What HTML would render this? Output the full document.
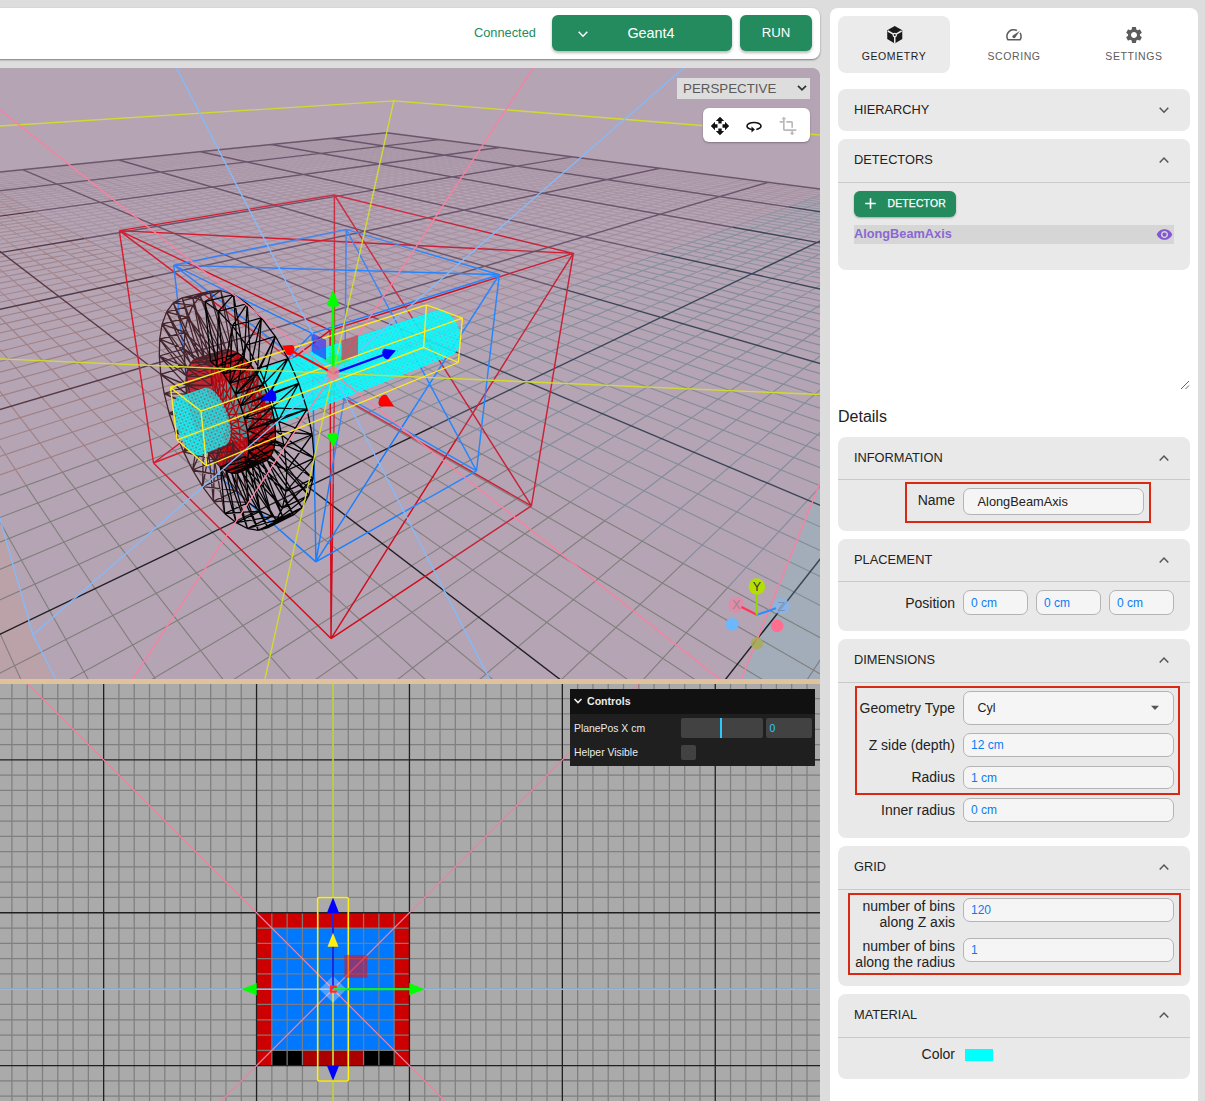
<!DOCTYPE html><html><head><meta charset="utf-8"><title>yaptide</title><style>
*{box-sizing:border-box;margin:0;padding:0}
html,body{width:1205px;height:1101px;overflow:hidden;background:#dddddd;font-family:"Liberation Sans",sans-serif;color:#222}
.abs{position:absolute}
#topbar{left:-30px;top:8px;width:850px;height:51px;background:#fff;border-radius:8px;box-shadow:0 1px 2px rgba(0,0,0,.45)}
.btn{background:#238b5e;color:#fff;border-radius:6px;box-shadow:0 2px 3px rgba(0,0,0,.28);text-align:center}
#v3d{left:0;top:68px;width:820px;height:611px;background:#aaaaaa;overflow:hidden;border-top-right-radius:8px}
#split{left:0;top:679px;width:820px;height:5px;background:#e1c39b}
#vbot{left:0;top:684px;width:820px;height:417px;background:#aaaaaa;overflow:hidden}
#panel{left:830px;top:8px;width:368px;height:1110px;background:#fff;border-radius:8px}
.acc{left:838px;width:352px;background:#e9e9e9;border-radius:8px}
.acch{left:854px;font-size:12.8px;color:#222;white-space:nowrap;line-height:16px}
.div{left:838px;width:352px;height:1px;background:#c9c9c9}
.lab{font-size:14px;color:#222;text-align:right;white-space:nowrap;line-height:16px}
.inp{background:#f5f5f5;border:1px solid #b4b4b4;border-radius:7px;font-size:12px;color:#0b7cf4;line-height:22px;padding-left:7px;white-space:nowrap}
.redbox{border:2.8px solid #d82a12}
.tab{font-size:10.5px;letter-spacing:.6px;text-align:center;white-space:nowrap;line-height:12px}
.gui{font-size:10.4px;color:#ebebeb;white-space:nowrap;line-height:12px}
</style></head><body>
<div id="topbar" class="abs"></div>
<div class="abs" style="left:474px;top:24.5px;font-size:12.8px;line-height:16px;color:#238b5e">Connected</div>
<div class="abs btn" style="left:552px;top:15px;width:180px;height:36px"></div>
<svg class="abs" style="left:576px;top:27.5px" width="14" height="12" viewBox="-7 -6 14 12"><path d="M-4.3 -2.2L0 2.2L4.3 -2.2" fill="none" stroke="#fff" stroke-width="1.5"/></svg>
<div class="abs" style="left:606px;top:24px;width:90px;text-align:center;font-size:14.4px;line-height:18px;color:#fff">Geant4</div>
<div class="abs btn" style="left:740px;top:15px;width:72px;height:36px;font-size:13.2px;line-height:35px">RUN</div>
<div id="v3d" class="abs"><svg width="820" height="611" viewBox="0 68 820 611" fill="none" stroke-linecap="butt" style="position:absolute;left:0;top:0;display:block"><polygon points="-509.8,-1272.5 -40306.8,-216834.5 137224.1,269820.7 32.9,634.8" fill="#87b9f5" fill-opacity="0.2" stroke="none"/>
<polygon points="1700.3,-1711.7 736.1,692.2 -3938.8,6888.0 -168206.3,206558.9 60164.4,-216834.5" fill="#ff82a0" fill-opacity="0.2" stroke="none"/>
<path d="M846.9 760L891 676.2M754.4 760L830.9 643.6M569.6 760L609.1 716.9L727.7 587.6M-18.5 760L-50 669.4M477.2 760L560.9 680.1L683 563.3M57.5 760L0.3 634.2L-50 523.5M384.8 760L517.7 647.1L642.2 541.2M133.5 760L49.6 610.5L-12.6 499.8M292.4 760L478.7 617.3L604.8 520.8M209.5 760L95.1 588.7L26.2 485.6M200 760L443.5 590.4L570.3 502.1M285.5 760L137.1 568.6L62.6 472.3M107.6 760L411.5 565.9L538.4 484.8M361.5 760L176.2 549.8L96.8 459.8M15.2 760L382.2 543.5L508.9 468.8M437.5 760L212.5 532.4L129.1 448.0M-50 745.1L355.3 523L481.5 453.9M513.5 760L246.4 516.1L159.6 436.8M-50 698.8L330.6 504.1L455.9 440.1M589.5 760L278.1 500.9L188.4 426.3M-50 622.5L286.7 470.5L409.7 415.0M741.4 760L690.4 723.9L335.7 473.3L241.6 406.8M-50 590.7L267 455.5L388.8 403.6M817.4 760L715 692.7L361.9 460.7L266.2 397.8M-50 562.3L248.7 441.6L369.1 392.9M893.4 760L737.4 664.2L386.6 448.9L289.5 389.3M-50 536.7L231.7 428.5L350.5 382.9M900 720L757.9 638.1L410 437.7L311.8 381.1M-50 513.5L215.7 416.3L333.1 373.4M900 681.1L776.8 614.2L432.1 427.1L333.1 373.4" stroke="#7c7c78" stroke-width="1.1" stroke-opacity="0.95"/>
<path d="M891 676.2L900 659.2M830.9 643.6L899.7 538.8L900 538.4M727.7 587.6L807.8 500.1L900 399.6M683 563.3L767.1 483L875.3 379.6L900 356.0M642.2 541.2L729.3 467.1L843.2 370.3L900 322.0M604.8 520.8L694.2 452.3L812.9 361.5L888 304.0M570.3 502.1L661.5 438.6L784.2 353.2L862.8 298.4M538.4 484.8L631 425.7L757 345.3L838.7 293.1M508.9 468.8L602.4 413.7L731.1 337.8M481.5 453.9L575.6 402.4L706.5 330.6M455.9 440.1L550.3 391.8L683.2 323.8M409.7 415L504.2 372.3L639.6 311.2M388.8 403.6L483 363.4L619.3 305.3M369.1 392.9L462.9 355L599.9 299.7M350.5 382.9L443.9 347L581.3 294.3M333.1 373.4L425.9 339.4M900 646.4L794.1 592.1L453 417.1L353.3 366.0M900 615.3L810.2 571.7L472.8 407.6L372.7 358.9M900 587.4L825.1 552.7L491.6 398.5L391.2 352.1M900 562L839 535.1L509.5 389.9L408.9 345.6M900 517.8L864 503.3L542.8 374L442.2 333.4M900 498.5L875.3 488.9L558.4 366.5L457.8 327.7M900 480.6L885.9 475.4L573.2 359.4L472.9 322.2M900 464.2L895.9 462.7L587.3 352.6L487.3 316.9M900 448.9L600.9 346.1M900 434.7L613.9 339.9M900 421.5L626.4 333.9M900 409.2L638.3 328.2M900 397.6L649.8 322.7M900 376.6L671.5 312.3M900 367L681.7 307.4M900 358L691.6 302.6M900 349.4L701.1 298.1M900 341.4L710.3 293.7M900 333.7L719.1 289.4" stroke="#7f8b97" stroke-width="1.1" stroke-opacity="0.95"/>
<path d="M-12.6 499.8L-50 433.1M26.2 485.6L-20.6 415.5L-50 371.6M62.6 472.3L11.3 406.1L-50 327.0M96.8 459.8L41.6 397.1L-30.2 315.7M129.1 448L70.4 388.6L-6.6 310.7M159.6 436.8L97.9 380.5L16.1 305.8M188.4 426.3L124 372.8L38 301.2M241.6 406.8L172.9 358.3L79.4 292.3M266.2 397.8L195.7 351.6L99.1 288.1M289.5 389.3L217.6 345.1M311.8 381.1L238.5 338.9M333.1 373.4L258.6 333.0M-50 492.4L200.7 404.8L316.5 364.4M-50 473.1L186.6 394.1L300.9 355.9M-50 455.5L173.3 384L286.1 347.9M-50 439.2L160.8 374.4L272 340.2M-50 410.3L137.9 356.8L245.9 326.1M-50 397.4L127.3 348.7L233.8 319.5M-50 385.4L117.2 341.1L222.3 313.2M-50 374.2L107.7 333.8M-50 363.7L98.6 326.8M-50 353.8L89.9 320.2M-50 344.6L81.7 313.9M-50 335.9L73.8 307.9M-50 327.7L66.3 302.1M-50 312.6L52.2 291.4" stroke="#9d7e82" stroke-width="1.1" stroke-opacity="0.95"/>
<path d="M316.5 364.4L408.8 332.2M353.3 366L277.9 327.3M300.9 355.9L392.5 325.3M372.7 358.9L296.5 321.8M286.1 347.9L376.9 318.8M391.2 352.1L314.3 316.5M272 340.2L362.1 312.5M408.9 345.6L331.4 311.5M245.9 326.1L334.4 300.9M442.2 333.4L363.8 301.9M233.8 319.5L321.4 295.4M457.8 327.7L379.2 297.4M222.3 313.2L309 290.2M472.9 322.2L394 293.0M487.3 316.9L408.3 288.8" stroke="#9f8999" stroke-width="1.1" stroke-opacity="0.95"/>
<path d="M888 304L900 294.8M862.8 298.4L900 272.5M838.7 293.1L895.9 256.5L900 253.9M731.1 337.8L815.5 288L875.2 252.8L900 238.1M706.5 330.6L793.4 283L855.2 249.2M683.2 323.8L772.1 278.3L835.9 245.7M639.6 311.2L732 269.5L799.2 239.2M619.3 305.3L713.2 265.3L781.7 236.0M599.9 299.7L695 261.2L764.8 233.0M581.3 294.3L677.4 257.3L748.5 230.1M425.9 339.4L563.5 289.1L660.5 253.6L732.6 227.2M600.9 346.1L501.2 311.9M613.9 339.9L514.6 307.0M626.4 333.9L527.5 302.3M638.3 328.2L539.9 297.7M649.8 322.7L551.9 293.3M671.5 312.3L574.7 285.0M681.7 307.4L585.5 281.0M691.6 302.6L595.9 277.2M701.1 298.1L606.1 273.5M710.3 293.7L615.9 269.9M719.1 289.4L625.4 266.5M900 326.4L727.7 285.3L634.6 263.1M900 319.5L736 281.4L643.5 259.8M900 312.9L744 277.5L652.1 256.7M900 300.7L759.2 270.2L668.7 250.6M900 295L766.4 266.7L676.6 247.7M900 289.5L773.5 263.4L684.3 244.9M900 284.3L780.3 260.1L691.8 242.2M900 279.3L786.9 256.9L699 239.5M900 274.5L793.3 253.8M900 270L799.6 250.9M900 265.5L805.6 247.9M900 261.3L811.5 245.1M900 253.3L822.8 239.7M900 249.5L828.2 237.1M900 245.9L833.4 234.6M900 242.4L838.6 232.1M900 239L843.6 229.7M900 235.7L848.4 227.4M900 232.5L853.2 225.1M900 229.5L857.8 222.9" stroke="#7f8b97" stroke-width="1.1" stroke-opacity="0.8"/>
<path d="M-30.2 315.7L-50 293.2M-6.6 310.7L-50 266.8M16.1 305.8L-35.7 258.6L-50 245.5M38 301.2L-17 255.4L-50 228.0M79.4 292.3L18.8 249.5M99.1 288.1L35.9 246.6M217.6 345.1L118.1 284L52.6 243.8M238.5 338.9L136.5 280.1L68.8 241.1M258.6 333L154.2 276.3L84.5 238.5M107.7 333.8L211.2 307.2M98.6 326.8L200.7 301.5M89.9 320.2L190.6 296.0M81.7 313.9L180.9 290.8M73.8 307.9L171.7 285.8M66.3 302.1L162.8 281.0M52.2 291.4L146 271.9M-50 305.7L45.6 286.3L138.2 267.6M-50 299.1L39.2 281.5L130.6 263.5M-50 292.8L33.2 276.8L123.3 259.5M-50 286.9L27.3 272.4L116.2 255.7M-50 281.2L21.7 268.1L109.4 252.0M-50 275.8L16.3 263.9L102.9 248.4M-50 270.6L11 259.9L96.5 245.0M-50 265.7L6 256.1L90.4 241.7M-50 256.4L-3.5 248.8M-50 252.1L-8 245.4M-50 247.9L-12.4 242.0M-50 244L-16.6 238.8M-50 240.1L-20.7 235.7M-50 236.4L-24.6 232.7M-50 232.9L-28.4 229.8M-50 229.5L-32.1 226.9" stroke="#9d7e82" stroke-width="1.1" stroke-opacity="0.8"/>
<path d="M408.8 332.2L546.4 284.1L644.2 250.0M277.9 327.3L171.4 272.6L99.8 235.9M392.5 325.3L530 279.4L628.5 246.5M296.5 321.8L188.1 269.1L114.7 233.4M376.9 318.8L514.3 274.8L613.3 243.1M314.3 316.5L204.2 265.6L129.2 231.0M362.1 312.5L499.2 270.4L598.6 239.9M331.4 311.5L219.8 262.3L143.4 228.6M334.4 300.9L470.6 262.1L570.6 233.7M363.8 301.9L249.7 255.9L170.6 224.1M321.4 295.4L457.1 258.2L557.3 230.7M379.2 297.4L264 252.9M309 290.2L444.1 254.4L544.4 227.9M394 293L277.9 249.9M211.2 307.2L297.2 285.2L431.6 250.8M408.3 288.8L291.3 247.0M200.7 301.5L285.7 280.4L419.5 247.3M501.2 311.9L422.1 284.7L304.4 244.2M190.6 296L274.8 275.8L407.8 243.9M514.6 307L435.4 280.7L317.1 241.5M180.9 290.8L264.3 271.4L396.4 240.6M527.5 302.3L448.3 276.9L329.5 238.9M171.7 285.8L254.1 267.1L385.5 237.4M539.9 297.7L460.8 273.2L341.6 236.3M162.8 281L244.4 263L374.9 234.3M551.9 293.3L472.9 269.7L353.3 233.8M146 271.9L226 255.3L354.8 228.5M574.7 285L496 262.8L375.8 229.0M138.2 267.6L217.2 251.6L345.2 225.7M585.5 281L507 259.6L386.6 226.7M130.6 263.5L208.8 248.0M595.9 277.2L517.7 256.4L397.2 224.4M123.3 259.5L200.7 244.6M606.1 273.5L528 253.4M116.2 255.7L192.8 241.3M615.9 269.9L538.1 250.4M109.4 252L185.2 238.1M625.4 266.5L547.9 247.5M102.9 248.4L177.9 235.0M634.6 263.1L557.4 244.7M96.5 245L170.7 232.0M643.5 259.8L566.6 242.0M90.4 241.7L163.8 229.1M652.1 256.7L575.6 239.3M668.7 250.6L592.8 234.2M676.6 247.7L601.1 231.8M684.3 244.9L609.2 229.4M691.8 242.2L617.1 227.0M699 239.5L624.7 224.8" stroke="#9f8999" stroke-width="1.1" stroke-opacity="0.8"/>
<path d="M855.2 249.2L900 224.6M835.9 245.7L883.8 221.2L900 212.9M799.2 239.2L850.1 216.2L890.1 198.1M781.7 236L834 213.7L875.2 196.2M764.8 233L818.3 211.4L860.6 194.3M748.5 230.1L803.1 209.1L846.5 192.4M732.6 227.2L788.3 206.9L832.6 190.6M793.3 253.8L706.1 236.9M799.6 250.9L713 234.4M805.6 247.9L719.7 231.9M811.5 245.1L726.3 229.6M822.8 239.7L738.8 225.0M828.2 237.1L744.9 222.7M833.4 234.6L750.8 220.6M838.6 232.1L756.5 218.5M843.6 229.7L762.2 216.4M848.4 227.4L767.6 214.4M853.2 225.1L773 212.5M857.8 222.9L778.2 210.6M900 226.5L862.3 220.8L783.3 208.7M900 220.9L871 216.6L793.2 205.1M900 218.2L875.2 214.6L798 203.3M900 215.6L879.3 212.6L802.6 201.6M900 213.1L883.3 210.7L807.2 199.9M900 210.6L887.2 208.8L811.7 198.3M900 208.2L891 207L816 196.7M900 205.9L894.7 205.2L820.3 195.2M900 203.7L898.4 203.5L824.5 193.6M900 201.5L828.6 192.1" stroke="#7f8b97" stroke-width="1.1" stroke-opacity="0.64"/>
<path d="M18.8 249.5L-23.7 219.4L-50 200.8M35.9 246.6L-8.6 217.3L-41.7 195.6L-50 190.1M52.6 243.8L6.1 215.3L-28.5 194L-50 180.8M68.8 241.1L20.5 213.3L-15.5 192.5M84.5 238.5L34.6 211.4L-2.8 191.1M-3.5 248.8L78.8 235.4M-8 245.4L73.2 232.4M-12.4 242L67.9 229.4M-16.6 238.8L62.7 226.6M-20.7 235.7L57.6 223.9M-24.6 232.7L52.8 221.2M-28.4 229.8L48 218.7M-32.1 226.9L43.4 216.2M-50 226.2L-35.7 224.2L38.9 213.7M-50 220L-42.6 219L30.4 209.1M-50 217L-45.9 216.4L26.3 206.9M-50 214.1L-49.1 214L22.3 204.7M-50 211.4L18.4 202.6M-50 208.7L14.6 200.5M-50 206.1L11 198.6M-50 203.6L7.4 196.6M-50 201.2L3.9 194.7M-50 198.8L0.5 192.9M-50 194.3L-6.1 189.3M-50 192.2L-9.2 187.6M-50 190.1L-12.3 185.9" stroke="#9d7e82" stroke-width="1.1" stroke-opacity="0.64"/>
<path d="M644.2 250L717.3 224.5L773.9 204.7L819.2 188.9M99.8 235.9L48.3 209.5L9.6 189.6M628.5 246.5L702.4 221.8L759.9 202.6L806 187.2M114.7 233.4L61.8 207.7L21.7 188.2M613.3 243.1L687.9 219.2L746.3 200.5L793.2 185.5M129.2 231L74.9 205.9L33.7 186.8M598.6 239.9L673.9 216.7L733 198.5L780.6 183.9M143.4 228.6L87.7 204.1L45.4 185.4M570.6 233.7L647.1 211.9L707.5 194.7L756.4 180.8M170.6 224.1L112.5 200.7L68.1 182.8M557.3 230.7L634.2 209.6L695.2 192.8L744.7 179.3M264 252.9L183.7 221.9L124.5 199L79.1 181.5M544.4 227.9L621.7 207.3L683.2 191.0M277.9 249.9L196.5 219.7L136.3 197.4L90 180.2M431.6 250.8L531.9 225.1L609.6 205.2L671.5 189.3M291.3 247L208.9 217.7L147.8 195.8L100.6 179.0M419.5 247.3L519.7 222.4L597.7 203.1L660.2 187.6M304.4 244.2L221.1 215.6L159 194.3L111 177.8M407.8 243.9L508 219.8L586.2 201L649 185.9M317.1 241.5L233 213.6L170.1 192.8M396.4 240.6L496.6 217.3L575 199L638.2 184.3M329.5 238.9L244.6 211.7L180.9 191.3M385.5 237.4L485.5 214.8L564.1 197L627.6 182.7M341.6 236.3L255.9 209.8L191.4 189.8M374.9 234.3L474.7 212.4L553.5 195.1L617.2 181.1M353.3 233.8L267 207.9L201.8 188.4M354.8 228.5L454.1 207.8L533 191.4M375.8 229L288.4 204.4L221.9 185.7M345.2 225.7L444.2 205.7L523.1 189.7M386.6 226.7L298.7 202.6L231.7 184.3M208.8 248L335.8 223L434.6 203.5L513.5 188.0M397.2 224.4L308.8 200.9L241.3 183.0M200.7 244.6L326.8 220.4L425.2 201.4L504.1 186.3M528 253.4L407.5 222.2L318.7 199.3L250.7 181.7M192.8 241.3L318 217.8L416.1 199.4L495 184.6M538.1 250.4L417.5 220.1L328.4 197.7L259.9 180.4M185.2 238.1L309.5 215.3L407.2 197.5L486 183.0M547.9 247.5L427.3 218L337.9 196.1L268.9 179.2M177.9 235L301.3 212.9L398.6 195.5L477.3 181.5M557.4 244.7L436.9 215.9L347.2 194.5L277.8 178.0M170.7 232L293.2 210.6L390.1 193.7L468.7 179.9M566.6 242L446.2 213.9L356.3 193.0M163.8 229.1L285.4 208.3L381.9 191.8M575.6 239.3L455.4 212L365.2 191.5M78.8 235.4L150.7 223.6L270.4 204L366.1 188.3M592.8 234.2L473 208.2L382.4 188.6M73.2 232.4L144.4 220.9L263.2 201.9L358.4 186.6M601.1 231.8L481.5 206.4L390.8 187.2M67.9 229.4L138.3 218.4L256.2 199.9L351 185.0M609.2 229.4L489.8 204.6L399 185.9M62.7 226.6L132.4 215.9L249.4 197.9L343.7 183.4M617.1 227L497.9 202.9L407.1 184.5M57.6 223.9L126.7 213.5L242.8 196L336.6 181.8M624.7 224.8L505.8 201.2L415 183.2M52.8 221.2L121.1 211.1L236.3 194.1L329.7 180.3M706.1 236.9L632.2 222.6L513.6 199.6L422.7 181.9M48 218.7L115.7 208.8L230 192.3L322.9 178.8M713 234.4L639.5 220.4L521.2 197.9L430.3 180.6M43.4 216.2L110.4 206.6L223.8 190.5M719.7 231.9L646.6 218.3L528.7 196.3L437.7 179.4M38.9 213.7L105.3 204.5L217.8 188.7M726.3 229.6L653.5 216.3L536 194.8L445.1 178.2M30.4 209.1L95.4 200.3L206.2 185.4M738.8 225L666.9 212.3L550.1 191.8M26.3 206.9L90.7 198.3L200.7 183.7M744.9 222.7L673.4 210.4L556.9 190.3M22.3 204.7L86.1 196.4L195.2 182.2M750.8 220.6L679.7 208.5L563.7 188.9M18.4 202.6L81.6 194.5L189.9 180.6M756.5 218.5L685.8 206.7L570.2 187.5M14.6 200.5L77.2 192.7L184.7 179.1M762.2 216.4L691.9 204.9L576.7 186.1M11 198.6L72.9 190.9M767.6 214.4L697.8 203.2L583 184.7M7.4 196.6L68.8 189.1M773 212.5L703.5 201.5L589.2 183.4M3.9 194.7L64.7 187.4M778.2 210.6L709.2 199.8L595.3 182.1M0.5 192.9L60.7 185.7M783.3 208.7L714.7 198.2L601.2 180.8M-6.1 189.3L53.1 182.5M793.2 205.1L725.4 195L612.8 178.4M-9.2 187.6L49.4 181.0M798 203.3L730.6 193.5M-12.3 185.9L45.8 179.4M802.6 201.6L735.6 192.0M807.2 199.9L740.6 190.5M811.7 198.3L745.5 189.1M816 196.7L750.2 187.7M820.3 195.2L754.9 186.3M824.5 193.6L759.5 184.9M828.6 192.1L764 183.6" stroke="#9f8999" stroke-width="1.1" stroke-opacity="0.64"/>
<path d="M-15.5 192.5L-43.5 176.4M-2.8 191.1L-32 175.2M-50 188.1L-15.3 184.3M-50 186.1L-18.3 182.7M-50 184.2L-21.2 181.1M-50 182.3L-24 179.6M-50 180.5L-26.7 178.1M-50 178.8L-29.4 176.7" stroke="#9d7e82" stroke-width="1.1" stroke-opacity="0.5"/>
<path d="M9.6 189.6L-20.7 174.1M21.7 188.2L-9.6 173.0M33.7 186.8L1.4 171.9M45.4 185.4L12.1 170.8M68.1 182.8L33 168.7M79.1 181.5L43.2 167.6M683.2 191L733.3 177.8M90 180.2L53.2 166.6M671.5 189.3L722.1 176.3M100.6 179L63 165.6M660.2 187.6L711.2 174.9M111 177.8L72.7 164.6M649 185.9L700.5 173.5M170.1 192.8L121.2 176.6L82.2 163.7M638.2 184.3L690.1 172.2M180.9 191.3L131.3 175.4L91.6 162.7M627.6 182.7L679.9 170.8M191.4 189.8L141.1 174.3L100.8 161.8M617.2 181.1L669.8 169.5M201.8 188.4L150.8 173.1L109.9 160.9M533 191.4L597.2 178.1L650.4 167.0M221.9 185.7L169.7 170.9L127.6 159.1M523.1 189.7L587.5 176.6L641 165.8M231.7 184.3L178.9 169.9L136.2 158.2M513.5 188L578.1 175.2L631.8 164.6M241.3 183L187.9 168.8L144.7 157.3M504.1 186.3L568.8 173.8L622.8 163.5M250.7 181.7L196.8 167.8L153.1 156.5M495 184.6L559.8 172.5L614 162.3M259.9 180.4L205.5 166.8L161.3 155.7M486 183L550.9 171.1L605.3 161.2M268.9 179.2L214.1 165.8L169.4 154.8M477.3 181.5L542.2 169.8L596.8 160.1M277.8 178L222.5 164.8L177.4 154.0M468.7 179.9L533.8 168.6L588.5 159.0M356.3 193L286.5 176.8L230.8 163.8L185.3 153.2M381.9 191.8L460.4 178.4L525.5 167.3L580.3 157.9M365.2 191.5L295 175.6L238.9 162.9L193 152.4M366.1 188.3L444.3 175.5L509.3 164.9L564.4 155.9M382.4 188.6L311.7 173.3L254.8 161L208.2 150.9M358.4 186.6L436.4 174.1L501.5 163.7L556.7 154.9M390.8 187.2L319.8 172.2L262.6 160.1L215.6 150.2M351 185L428.8 172.8L493.9 162.6L549.1 153.9M399 185.9L327.7 171.1L270.2 159.2L222.9 149.4M343.7 183.4L421.3 171.4L486.4 161.4L541.6 152.9M407.1 184.5L335.5 170L277.8 158.3L230.1 148.7M336.6 181.8L414 170.1L479 160.3L534.3 152.0M415 183.2L343.2 169L285.2 157.5L237.2 148.0M329.7 180.3L406.9 168.8L471.8 159.2L527.1 151.1M422.7 181.9L350.8 167.9L292.4 156.6L244.2 147.3M322.9 178.8L399.9 167.6L464.7 158.2L520.1 150.1M430.3 180.6L358.2 166.9L299.6 155.8L251.1 146.6M223.8 190.5L316.3 177.3L393 166.4L457.8 157.1L513.2 149.2M437.7 179.4L365.5 165.9L306.7 155L257.9 145.9M217.8 188.7L309.8 175.9L386.3 165.2L451 156.1L506.4 148.4M445.1 178.2L372.7 164.9L313.6 154.2L264.6 145.2M206.2 185.4L297.2 173.1L373.3 162.8L437.7 154.1L493.1 146.6M550.1 191.8L459.3 175.8L386.6 163L327.2 152.6L277.7 143.9M200.7 183.7L291.2 171.7L366.9 161.7L431.3 153.1L486.6 145.8M556.9 190.3L466.2 174.6L393.5 162.1L333.9 151.8L284.2 143.2M195.2 182.2L285.2 170.4L360.7 160.6L425 152.2L480.3 145.0M563.7 188.9L473 173.5L400.2 161.2L340.4 151L290.5 142.6M189.9 180.6L279.4 169.1L354.6 159.5L418.8 151.3L474 144.2M570.2 187.5L479.7 172.4L406.8 160.3L346.9 150.3L296.8 141.9M184.7 179.1L273.7 167.9L348.7 158.4L412.7 150.3L467.9 143.4M576.7 186.1L486.2 171.3L413.3 159.4L353.3 149.5L303 141.3M72.9 190.9L179.6 177.6L268.1 166.6L342.8 157.4L406.7 149.4L461.9 142.6M583 184.7L492.6 170.2L419.7 158.5L359.5 148.8L309.1 140.7M68.8 189.1L174.6 176.2L262.7 165.4L337.1 156.3L400.8 148.6L455.9 141.8M589.2 183.4L499 169.2L426 157.6L365.7 148.1L315.1 140.1M64.7 187.4L169.8 174.8L257.3 164.2L331.4 155.3L395 147.7L450.1 141.1M595.3 182.1L505.2 168.1L432.2 156.8L371.8 147.4L321 139.5M60.7 185.7L165 173.4L252.1 163.1L325.9 154.3L389.3 146.8L444.3 140.3M601.2 180.8L511.3 167.1L438.3 155.9L377.8 146.7L326.9 138.9M53.1 182.5L155.8 170.7L241.9 160.8L315.2 152.4L378.2 145.2L433.1 138.9M612.8 178.4L523.2 165.1L450.2 154.3L389.6 145.3L338.4 137.7M49.4 181L151.3 169.4L237 159.7L309.9 151.5L372.8 144.3L427.6 138.1M730.6 193.5L618.5 177.2L529 164.1L456 153.5L395.3 144.6L344 137.2M45.8 179.4L147 168.1L232.1 158.6L304.8 150.5L367.5 143.5L422.2 137.4M735.6 192L624 176L534.7 163.2L461.8 152.7L401 144L349.6 136.6M-15.3 184.3L42.2 177.9L142.7 166.9L227.4 157.6L299.7 149.6L362.3 142.8L416.9 136.8M740.6 190.5L629.4 174.8L540.4 162.2L467.4 151.9L406.6 143.3L355.1 136.0M-18.3 182.7L38.8 176.5L138.5 165.7L222.7 156.6L294.8 148.8L357.1 142L411.7 136.1M745.5 189.1L634.8 173.7L545.9 161.3L473 151.2L412.1 142.7L360.5 135.5M-21.2 181.1L35.4 175.1L134.4 164.5L218.1 155.5L289.9 147.9L352.1 141.2L406.5 135.4M750.2 187.7L640 172.6L551.3 160.4L478.5 150.4L417.6 142L365.9 134.9M-24 179.6L32.1 173.7L130.4 163.3L213.6 154.6L285.1 147L347.1 140.5L401.4 134.8M754.9 186.3L645.1 171.5L556.7 159.5L483.9 149.7L422.9 141.4L371.2 134.4M-26.7 178.1L28.9 172.3L126.4 162.2L209.2 153.6L280.4 146.2L342.2 139.7L396.4 134.1M759.5 184.9L650.2 170.4L562 158.6L489.2 148.9L428.2 140.8L376.4 133.9M-29.4 176.7L25.7 171L122.6 161.1L204.9 152.6L275.8 145.3L337.4 139L391.5 133.5M764 183.6L655.2 169.3L567.2 157.8L494.5 148.2L433.5 140.2L381.5 133.4" stroke="#9f8999" stroke-width="1.1" stroke-opacity="0.5"/>
<path d="M662 760L776.8 614.2M-50 658.3L432.1 427.1M665.5 760L215.7 416.3" stroke="#16161a" stroke-width="1.4" stroke-opacity="0.93"/>
<path d="M776.8 614.2L900 457.5M432.1 427.1L900 202.7M900 538.9L425.9 339.4M900 386.8L563.5 289.1M900 306.7L660.5 253.6M900 257.2L732.6 227.2M900 223.7L788.3 206.9M900 199.4L832.6 190.6" stroke="#323f51" stroke-width="1.4" stroke-opacity="0.93"/>
<path d="M215.7 416.3L-50 213.3M-50 424.2L258.6 333.0M-50 319.9L154.2 276.3M-50 261L84.5 238.5M-50 223L34.6 211.4M-50 196.6L-2.8 191.1M-50 177.1L-32 175.2" stroke="#50313c" stroke-width="1.4" stroke-opacity="0.93"/>
<path d="M258.6 333L768.4 182.3M425.9 339.4L22.6 169.7M154.2 276.3L660 168.3M563.5 289.1L118.8 160.0M84.5 238.5L572.3 156.9M660.5 253.6L200.7 151.7M34.6 211.4L499.7 147.5M732.6 227.2L271.2 144.5M-2.8 191.1L438.7 139.6M788.3 206.9L332.7 138.3M-32 175.2L386.6 132.8M832.6 190.6L386.6 132.8" stroke="#655065" stroke-width="1.4" stroke-opacity="0.93"/>
<path d="M331 638.6L226.7 535.5M330.1 330.4L202.1 269.8M331 638.6L330.1 330.4M331 638.6L443.9 563.8M330.1 330.4L470.9 285.8M331 638.6L455.9 440.1M331 638.6L333.2 483.4M215.7 416.3L330.1 330.4" stroke="#d00e1e" stroke-width="1.45"/>
<path d="M226.7 535.5L153.5 463.0M202.1 269.8L119.3 230.6M153.5 463L119.3 230.6M153.5 463L252.3 424.7M119.3 230.6L238.5 210.9M245.9 326.1L119.3 230.6M332.9 241.3L119.3 230.6M153.5 463L215.7 416.3" stroke="#d61c2e" stroke-width="1.45"/>
<path d="M531.4 505.9L419 441.4M573.3 253.4L434 219.4M531.4 505.9L573.3 253.4M443.9 563.8L531.4 505.9M470.9 285.8L573.3 253.4M455.9 440.1L573.3 253.4L332.9 241.3M531.4 505.9L425.9 339.4" stroke="#c72338" stroke-width="1.45"/>
<path d="M419 441.4L334.4 392.8M434 219.4L334.4 195.0M334.4 392.8L334.4 195.0M252.3 424.7L334.4 392.8M238.5 210.9L334.4 195.0M334.4 392.8L245.9 326.1M333.2 483.4L334.4 392.8M425.9 339.4L334.4 195.0" stroke="#ce2e44" stroke-width="1.45"/>
<path d="M315.9 561.9L248.5 502.4M312.1 333.4L233.5 294.6M315.9 561.9L312.1 333.4M315.9 561.9L404 511.9M312.1 333.4L416.5 300.7M315.9 561.9L409.7 415.0M315.9 561.9L333.1 462.9M241.6 406.8L312.1 333.4" stroke="#1880ff" stroke-width="1.45"/>
<path d="M248.5 502.4L195 455.2M233.5 294.6L173.7 265.1M195 455.2L173.7 265.1M195 455.2L275.8 423.2M173.7 265.1L267.7 245.7M272 340.2L173.7 265.1M333 269.8L173.7 265.1M195 455.2L241.6 406.8" stroke="#3480f4" stroke-width="1.45"/>
<path d="M476.5 470.8L404.3 429.7M499.3 274.7L414.2 249.6M476.5 470.8L499.3 274.7M404 511.9L476.5 470.8M416.5 300.7L499.3 274.7M409.7 415L499.3 274.7L333 269.8M476.5 470.8L408.9 345.6" stroke="#2587fe" stroke-width="1.45"/>
<path d="M404.3 429.7L344.8 395.9M414.2 249.6L346.2 229.4M344.8 395.9L346.2 229.4M275.8 423.2L344.8 395.9M267.7 245.7L346.2 229.4M344.8 395.9L272 340.2M333.1 462.9L344.8 395.9M408.9 345.6L346.2 229.4" stroke="#3f86f3" stroke-width="1.45"/>
<polygon points="186.1,381.6 186.5,376.1 187.4,371.1 188.8,366.8 190.8,363.3 193.1,360.6 195.9,358.7 222.4,350.7 225.8,349.8 229.5,349.9 233.5,351.0 237.7,353.1 242.0,356.2 246.5,360.2 250.8,365.2 255.1,371.0 259.2,377.5 262.9,384.6 266.3,392.1 269.3,399.9 271.7,407.9 273.5,415.8 274.8,423.5 275.4,430.8 275.5,437.6 274.9,443.7 273.7,449.1 272.0,453.7 269.7,457.3 267.1,460.0 264.0,461.8 238.5,472.8 235.3,473.5 231.8,473.2 228.1,471.9 224.3,469.8 220.4,466.8 216.4,463.1 212.6,458.6 208.8,453.5 205.2,447.9 201.7,441.8 198.5,435.4 195.6,428.6 193.1,421.7 190.8,414.7 189.0,407.7 187.6,400.8 186.6,394.1 186.1,387.7" fill="#b00a12" fill-opacity="0.6" stroke="none"/>
<path d="M214 398.5L215.7 416.3M240.3 389.4L241.6 406.8M218.8 450.4L215.7 416.3M216.9 429.3L218.1 430.1M216.9 429.3L220.4 443.7M218.1 442.1L220.4 443.7M218.1 442.1L219.6 447.1M244 440.3L241.6 406.8M242.5 419.6L243.7 420.4M242.5 419.6L245.8 433.7M243.4 432.1L245.8 433.7M243.4 432.1L244.9 437.0M222 452.6L215.7 416.3M218.1 430.1L219.2 430.6M218.1 430.1L222.7 444.7M220.4 443.7L222.7 444.7M220.4 443.7L222.3 448.7M247.2 442.4L241.6 406.8M243.7 420.4L244.9 420.8M243.7 420.4L248.2 434.6M245.8 433.7L248.2 434.6M245.8 433.7L247.7 438.5M225 454L215.7 416.3M219.2 430.6L220.3 430.7M219.2 430.6L224.8 445.0M222.7 444.7L224.8 445.0M250.4 443.7L241.6 406.8M244.9 420.8L246 420.8M244.9 420.8L250.4 434.8M248.2 434.6L250.4 434.8M227.9 454.5L215.7 416.3M220.3 430.7L221.2 430.4M220.3 430.7L226.8 444.6M224.8 445L226.1 444.7M253.3 444.1L241.6 406.8M246 420.8L247 420.6M246 420.8L252.4 434.4M250.4 434.8L251.7 434.5M223.1 435.1L215.7 416.3M221.2 430.4L222 429.8M221.2 430.4L228.4 443.5M248.8 425.2L241.6 406.8M247 420.6L247.9 420.0M247 420.6L254.2 433.2M224.2 434.4L215.7 416.3M222 429.8L222.7 428.9M222 429.8L229.8 441.7M250 424.4L241.6 406.8M247.9 420L248.6 419.0M247.9 420L255.7 431.4M225.1 433.1L215.7 416.3M222.7 428.9L223.2 427.6M222.7 428.9L230.9 439.2M250.9 423.1L241.6 406.8M248.6 419L249.1 417.8M248.6 419L256.8 429.0M225.7 431.5L215.7 416.3M223.2 427.6L223.5 426.1M223.2 427.6L231.5 436.1M251.7 421.5L241.6 406.8M249.1 417.8L249.5 416.3M249.1 417.8L257.6 425.9M226.1 429.4L215.7 416.3M223.5 426.1L223.6 424.3M223.5 426.1L231.8 432.6M252.2 419.5L241.6 406.8M249.5 416.3L249.7 414.5M249.5 416.3L258 422.4M226.3 427L215.7 416.3M223.6 424.3L223.5 422.3M223.6 424.3L231.7 428.5M252.4 417.1L241.6 406.8M249.7 414.5L249.6 412.5M249.7 414.5L258 418.4M226.2 424.4L215.7 416.3M223.5 422.3L223.3 420.1M223.5 422.3L228.5 423.5M252.4 414.5L241.6 406.8M249.6 412.5L249.4 410.4M249.6 412.5L254.8 413.6M225.8 421.5L215.7 416.3M223.3 420.1L222.8 417.9M223.3 420.1L227.8 419.7M252.1 411.6L241.6 406.8M249.4 410.4L249 408.2M249.4 410.4L254.2 409.9M225.2 418.4L215.7 416.3M222.8 417.9L222.1 415.6M222.8 417.9L226.8 415.9M251.5 408.7L241.6 406.8M249 408.2L248.3 406.0M249 408.2L253.2 406.1M224.3 415.3L215.7 416.3M222.1 415.6L221.3 413.3M222.1 415.6L225.5 412.0M250.7 405.7L241.6 406.8M248.3 406L247.6 403.7M248.3 406L251.9 402.3M223.2 412.3L215.7 416.3M221.3 413.3L220.4 411.1M221.3 413.3L223.9 408.2M249.6 402.7L241.6 406.8M247.6 403.7L246.6 401.6M247.6 403.7L250.4 398.7M222 409.3L215.7 416.3M220.4 411.1L219.3 409.0M220.4 411.1L222.1 404.7M248.3 399.8L241.6 406.8M246.6 401.6L245.5 399.6M246.6 401.6L248.6 395.3M220.5 406.5L215.7 416.3M219.3 409L218.1 407.1M219.3 409L220.7 397.6M246.9 397.1L241.6 406.8M245.5 399.6L244.4 397.7M245.5 399.6L247.3 388.3M219 404L215.7 416.3M218.1 407.1L216.9 405.5M218.1 407.1L218.2 394.3M245.3 394.6L241.6 406.8M244.4 397.7L243.2 396.1M244.4 397.7L244.8 385.1M217.3 401.8L215.7 416.3M216.9 405.5L215.7 404.1M216.9 405.5L215.7 391.6M243.7 392.5L241.6 406.8M243.2 396.1L241.9 394.8M243.2 396.1L242.2 382.5M215.7 399.9L215.7 416.3M215.7 404.1L214.4 403.0M215.7 404.1L213.2 389.5M242 390.7L241.6 406.8M241.9 394.8L240.6 393.8M241.9 394.8L239.7 380.5" stroke="#b2060e" stroke-width="1.25"/>
<path d="M214.4 403L213.2 402.3M214.4 403L210.8 388.1M240.6 393.8L239.4 393.1M240.6 393.8L237.2 379.2M212.4 397.6L215.7 416.3M213.2 402.3L212.1 401.9M213.2 402.3L208.5 387.4M238.7 388.5L241.6 406.8M239.4 393.1L238.2 392.8M239.4 393.1L234.8 378.6M210.9 397.1L215.7 416.3M212.1 401.9L211.1 401.9M212.1 401.9L206.4 387.4M237.1 388L241.6 406.8M238.2 392.8L237.1 392.8M238.2 392.8L232.7 378.6M209.5 397.1L215.7 416.3M211.1 401.9L210.1 402.2M211.1 401.9L204.6 388.1M205.8 387.6L204.6 388.1M235.6 388.1L241.6 406.8M237.1 392.8L236.1 393.1M237.1 392.8L230.7 379.4M232 378.9L230.7 379.4M201 378.8L215.7 416.3M210.1 402.2L209.4 402.9M210.1 402.2L203.1 389.6M204.6 388.1L203.1 389.6M227.2 370.3L241.6 406.8M236.1 393.1L235.3 393.8M236.1 393.1L229.1 380.9M230.7 379.4L229.1 380.9M199 380.8L215.7 416.3M209.4 402.9L208.7 403.9M209.4 402.9L201.9 391.6M203.1 389.6L201.9 391.6M225 372.3L241.6 406.8M235.3 393.8L234.6 394.8M235.3 393.8L227.8 382.9M229.1 380.9L227.8 382.9M197.4 383.6L215.7 416.3M208.7 403.9L208.3 405.2M208.7 403.9L201.1 394.3M201.9 391.6L201.1 394.3M201.9 391.6L199.2 388.9M223.3 375.1L241.6 406.8M234.6 394.8L234.1 396.1M234.6 394.8L226.8 385.5M227.8 382.9L226.8 385.5M227.8 382.9L225.1 380.3M196.3 387.1L215.7 416.3M208.3 405.2L208 406.7M208.3 405.2L200.6 397.4M201.1 394.3L200.6 397.4M201.1 394.3L195.8 390.2M222.1 378.6L241.6 406.8M234.1 396.1L233.8 397.6M234.1 396.1L226.2 388.6M226.8 385.5L226.2 388.6M226.8 385.5L221.5 381.7M195.7 391.3L215.7 416.3M208 406.7L208 408.5M208 406.7L200.4 401.0M200.6 397.4L200.4 401.0M200.6 397.4L193.1 393.6M193.2 391.8L193.1 393.6M221.3 382.7L241.6 406.8M233.8 397.6L233.7 399.4M233.8 397.6L226 392.1M226.2 388.6L226 392.1M226.2 388.6L218.6 385.1M218.7 383.3L218.6 385.1M195.6 396L215.7 416.3M208 408.5L208.1 410.5M208 408.5L200.7 404.8M200.4 401L200.7 404.8M200.4 401L193.5 399.4M193.1 393.6L193.5 399.4M193.1 393.6L186.6 394.1M221 387.4L241.6 406.8M233.7 399.4L233.7 401.3M233.7 399.4L226.2 396.0M226 392.1L226.2 396.0M226 392.1L218.8 390.8M218.6 385.1L218.8 390.8M218.6 385.1L211.7 385.7M186.6 394.1L187.8 402.2M186.6 394.1L193 392.0M186.6 394.1L194.2 400.0M193 392L194.2 400.0M193 392L199.3 389.8M193 392L200.4 397.9M199.3 389.8L200.4 397.9M199.3 389.8L205.5 387.8M199.3 389.8L206.6 395.7M205.5 387.8L206.6 395.7M205.5 387.8L211.7 385.7M205.5 387.8L212.7 393.6M211.7 385.7L212.7 393.6M186.6 394.1L215.7 416.3M208.1 410.5L208.4 412.6M208.1 410.5L201.3 409.0M200.7 404.8L201.3 409.0M200.7 404.8L194.4 405.5M193.5 399.4L194.4 405.5M193.5 399.4L187.8 402.2M211.7 385.7L241.6 406.8M233.7 401.3L234 403.4M233.7 401.3L226.7 400.0M226.2 396L226.7 400.0M226.2 396L219.6 396.8M218.8 390.8L219.6 396.8M218.8 390.8L212.7 393.6M187.8 402.2L189.7 410.5M187.8 402.2L194.2 400.0M187.8 402.2L196 408.3M194.2 400L196 408.3M194.2 400L200.4 397.9M194.2 400L202.2 406.1M200.4 397.9L202.2 406.1M200.4 397.9L206.6 395.7M200.4 397.9L208.4 403.9M206.6 395.7L208.4 403.9M206.6 395.7L212.7 393.6M206.6 395.7L214.5 401.8M212.7 393.6L214.5 401.8M187.8 402.2L215.7 416.3M208.4 412.6L208.8 414.8M208.4 412.6L202.2 413.3M201.3 409L202.2 413.3M201.3 409L195.8 411.9M194.4 405.5L195.8 411.9M194.4 405.5L189.7 410.5M212.7 393.6L241.6 406.8M234 403.4L234.4 405.5M234 403.4L227.5 404.2M226.7 400L227.5 404.2M226.7 400L220.9 403.0M219.6 396.8L220.9 403.0M219.6 396.8L214.5 401.8M189.7 410.5L192.1 418.9M189.7 410.5L196 408.3M189.7 410.5L198.4 416.7M196 408.3L198.4 416.7M196 408.3L202.2 406.1M196 408.3L204.6 414.4M202.2 406.1L204.6 414.4M202.2 406.1L208.4 403.9M202.2 406.1L210.7 412.2M208.4 403.9L210.7 412.2M208.4 403.9L214.5 401.8M208.4 403.9L216.8 410.0M214.5 401.8L216.8 410.0M189.7 410.5L215.7 416.3M208.8 414.8L209.5 417.0M208.8 414.8L203.5 417.7M202.2 413.3L203.5 417.7M202.2 413.3L197.7 418.3M195.8 411.9L197.7 418.3M195.8 411.9L192.1 418.9M214.5 401.8L241.6 406.8M234.4 405.5L235 407.7M234.4 405.5L228.7 408.5M227.5 404.2L228.7 408.5M227.5 404.2L222.7 409.3M220.9 403L222.7 409.3M220.9 403L216.8 410.0M192.1 418.9L195.1 427.2M192.1 418.9L198.4 416.7M192.1 418.9L201.3 424.9M198.4 416.7L201.3 424.9M198.4 416.7L204.6 414.4M198.4 416.7L207.5 422.7M204.6 414.4L207.5 422.7M204.6 414.4L210.7 412.2M204.6 414.4L213.6 420.4M210.7 412.2L213.6 420.4M210.7 412.2L216.8 410.0M210.7 412.2L219.7 418.2M216.8 410L219.7 418.2M192.1 418.9L215.7 416.3M209.5 417L210.2 419.2M209.5 417L205 422.0M203.5 417.7L205 422.0M203.5 417.7L200 424.7M197.7 418.3L200 424.7M197.7 418.3L195.1 427.2M216.8 410L241.6 406.8M235 407.7L235.8 409.8M235 407.7L230.2 412.7M228.7 408.5L230.2 412.7M228.7 408.5L224.9 415.5M222.7 409.3L224.9 415.5M222.7 409.3L219.7 418.2M195.1 427.2L198.5 435.3M195.1 427.2L201.3 424.9M195.1 427.2L204.8 433.0M201.3 424.9L204.8 433.0M201.3 424.9L207.5 422.7M201.3 424.9L211 430.6M207.5 422.7L211 430.6M207.5 422.7L213.6 420.4M207.5 422.7L217.1 428.3M213.6 420.4L217.1 428.3M213.6 420.4L219.7 418.2M213.6 420.4L223.1 426.1M219.7 418.2L223.1 426.1M195.1 427.2L215.7 416.3M210.2 419.2L211.1 421.3M210.2 419.2L206.8 426.2M205 422L206.8 426.2M205 422L202.6 430.8M200 424.7L202.6 430.8M200 424.7L198.5 435.3M219.7 418.2L241.6 406.8M235.8 409.8L236.7 411.9M235.8 409.8L232 416.8M230.2 412.7L232 416.8M230.2 412.7L227.5 421.5M224.9 415.5L227.5 421.5M224.9 415.5L223.1 426.1M198.5 435.3L202.4 443.0M198.5 435.3L204.8 433.0M198.5 435.3L208.6 440.6M204.8 433L208.6 440.6M204.8 433L211 430.6M204.8 433L214.8 438.2M211 430.6L214.8 438.2M211 430.6L217.1 428.3M211 430.6L220.9 435.9M217.1 428.3L220.9 435.9M217.1 428.3L223.1 426.1M217.1 428.3L226.9 433.5M223.1 426.1L226.9 433.5M198.5 435.3L215.7 416.3M211.1 421.3L212.2 423.3M211.1 421.3L208.8 430.1M206.8 426.2L208.8 430.1M206.8 426.2L205.5 436.7M202.6 430.8L205.5 436.7M202.6 430.8L202.4 443.0M223.1 426.1L241.6 406.8M236.7 411.9L237.7 413.8M236.7 411.9L234 420.6M232 416.8L234 420.6M232 416.8L230.4 427.2M227.5 421.5L230.4 427.2M227.5 421.5L226.9 433.5M202.4 443L206.6 450.2M202.4 443L208.6 440.6M202.4 443L212.8 447.7M208.6 440.6L212.8 447.7M208.6 440.6L214.8 438.2M208.6 440.6L219 445.3M214.8 438.2L219 445.3M214.8 438.2L220.9 435.9M214.8 438.2L225.1 442.9M220.9 435.9L225.1 442.9M220.9 435.9L226.9 433.5M220.9 435.9L231.1 440.5M226.9 433.5L231.1 440.5M202.4 443L215.7 416.3M212.2 423.3L213.3 425.2M212.2 423.3L211 433.8M208.8 430.1L211 433.8M208.8 430.1L208.7 442.1M205.5 436.7L208.7 442.1M205.5 436.7L206.6 450.2M226.9 433.5L241.6 406.8M237.7 413.8L238.8 415.6M237.7 413.8L236.2 424.2M234 420.6L236.2 424.2M234 420.6L233.6 432.4M230.4 427.2L233.6 432.4M230.4 427.2L231.1 440.5M206.6 450.2L208.1 452.3M206.6 450.2L212.8 447.7M206.6 450.2L210.1 451.5M212.8 447.7L214.3 449.8M212.8 447.7L219 445.3M212.8 447.7L216.4 449.0M219 445.3L220.5 447.4M219 445.3L225.1 442.9M219 445.3L222.5 446.6M225.1 442.9L226.6 444.9M225.1 442.9L231.1 440.5M225.1 442.9L228.6 444.1M231.1 440.5L232.6 442.5M206.6 450.2L215.7 416.3M213.3 425.2L214.5 426.8M213.3 425.2L213.3 437.0M211 433.8L213.3 437.0M211 433.8L212.1 447.0M208.7 442.1L212.1 447.0M208.7 442.1L210.3 451.8M231.1 440.5L241.6 406.8M238.8 415.6L240 417.2M238.8 415.6L238.5 427.3M236.2 424.2L238.5 427.3M236.2 424.2L237.1 437.1M233.6 432.4L237.1 437.1M233.6 432.4L235 442.0M211 456.6L215.7 416.3M214.5 426.8L215.7 428.2M214.5 426.8L215.7 439.8M213.3 437L215.7 439.8M213.3 437L215.7 451.2M212.1 447L214.5 449.8M212.1 447L213.3 452.1M235.6 446.7L241.6 406.8M240 417.2L241.2 418.6M240 417.2L240.9 430.0M238.5 427.3L240.9 430.0M238.5 427.3L240.6 441.2M237.1 437.1L239.4 439.8M237.1 437.1L238.1 442.1M215.7 447.4L215.7 416.3M215.7 428.2L216.9 429.3M215.7 428.2L218.1 442.1M215.7 439.8L218.1 442.1M215.7 439.8L218 449.7M240.7 437.5L241.6 406.8M241.2 418.6L242.5 419.6M241.2 418.6L243.4 432.1M240.9 430L243.4 432.1M240.9 430L243.2 439.6" stroke="#c52532" stroke-width="1.25"/>
<path d="M186.6 394.1L188.2 404.2M211.7 385.7L213.1 395.7M186.6 394.1L211.7 385.7M186.6 394.1L213.1 395.7M189.3 390.7L192.9 405.1M178.7 399.5L192.9 405.1M188.2 404.2L190.8 414.7M213.1 395.7L215.5 405.9M188.2 404.2L213.1 395.7M188.2 404.2L215.5 405.9M188.2 404.2L175.8 398.8M188.2 404.2L173.7 411.2M213.1 395.7L200.2 390.6M213.1 395.7L192.9 405.1L199.2 424.3M175.2 411.2L192.9 405.1M176.9 416.1L199.2 424.3M190.8 414.7L194.3 425.2M215.5 405.9L218.9 416.2M190.8 414.7L215.5 405.9M190.8 414.7L218.9 416.2M190.8 414.7L174.4 413.6M190.8 414.7L179.3 428.6M215.5 405.9L192.9 405.1M215.5 405.9L199.2 424.3L206.9 442.9M175.7 432.9L199.2 424.3M175.7 432.9L206.9 442.9M194.3 425.2L198.5 435.3M218.9 416.2L223.1 426.1M194.3 425.2L218.9 416.2M194.3 425.2L223.1 426.1M194.3 425.2L180.1 431.1M194.3 425.2L186.1 445.6M218.9 416.2L199.2 424.3M218.9 416.2L206.9 442.9L211.4 451.6M189.5 449.6L206.9 442.9M198.5 435.3L203.4 444.9M223.1 426.1L227.9 435.3M198.5 435.3L223.1 426.1M198.5 435.3L227.9 435.3M198.5 435.3L187.2 448.0M198.5 435.3L195.5 453.2M223.1 426.1L206.9 442.9M223.1 426.1L219.4 443.7M203.4 444.9L207.4 451.3M227.9 435.3L232 441.6M203.4 444.9L227.9 435.3M203.4 444.9L226 444.0M203.4 444.9L197.9 457.8M203.4 444.9L203.2 455.7M227.9 435.3L221.8 448.3M227.9 435.3L227.4 446.0" stroke="#43242b" stroke-width="1.3"/>
<defs><pattern id="dots" width="5" height="4" patternUnits="userSpaceOnUse" patternTransform="rotate(-19)"><rect width="5" height="4" fill="#0ff"/><rect x="1" y="1" width="1.1" height="1.1" fill="#9a8fb8"/><rect x="3.500" y="3" width="1" height="1" fill="#6fb4cc"/></pattern><pattern id="dots2" width="4" height="4" patternUnits="userSpaceOnUse" patternTransform="rotate(24)"><rect width="4" height="4" fill="#19f0f2"/><rect x=".5" y=".5" width="1.6" height="1.3" fill="#a8242e"/><rect x="2.6" y="2.5" width="1.2" height="1.2" fill="#7c6f9a"/></pattern></defs><polygon points="173.5,407.8 173.7,405.0 174.1,402.5 174.8,400.4 175.7,398.8 176.8,397.5 178.2,396.8 434.9,311.1 437.0,310.6 439.3,310.4 441.6,310.7 443.9,311.4 446.3,312.5 448.6,313.9 450.7,315.7 452.8,317.8 454.6,320.2 456.3,322.8 457.7,325.6 458.8,328.6 459.6,331.6 460.2,334.7 460.4,337.8 460.3,340.7 459.9,343.5 459.1,346.2 458.1,348.6 456.8,350.7 455.3,352.5 453.5,353.9 451.6,355.0 200.0,455.2 198.5,455.7 196.9,455.6 195.2,455.1 193.3,454.0 191.4,452.5 189.4,450.6 187.5,448.3 185.6,445.6 183.7,442.7 181.9,439.5 180.3,436.0 178.7,432.5 177.4,428.8 176.2,425.1 175.2,421.4 174.4,417.7 173.9,414.2 173.6,410.9" fill="url(#dots)" fill-opacity="0.86" stroke="none"/>
<path d="M173.9 414.2L425 326.5M173.7 405L426.8 318.8M175.7 398.8L431 313.2M179.7 396.6L437 310.6M185.2 398.9L444 311.4M191.4 405.6L450.7 315.7M197.1 415.8L456.3 322.8M201.5 427.6L459.7 331.6M203.9 439.2L460.3 340.7M203.7 448.6L458.1 348.6M201.3 454.3L453.5 353.9M196.9 455.6L447.3 356.1M191.4 452.5L440.5 354.8M185.6 445.6L434.1 350.4M180.3 436L428.9 343.5M176.2 425.1L425.7 335.1" stroke="#00ffff" stroke-width="0.8" stroke-opacity="0.9"/>
<path d="M188.4 426.3L173.9 414.2M188.4 426.3L173.5 409.3M188.4 426.3L173.7 405.0M188.4 426.3L174.4 401.4M188.4 426.3L175.7 398.8M188.4 426.3L177.5 397.1M188.4 426.3L179.7 396.6M188.4 426.3L182.3 397.2M188.4 426.3L185.2 398.9M188.4 426.3L188.3 401.8M188.4 426.3L191.4 405.6M188.4 426.3L194.3 410.4M188.4 426.3L197.1 415.8M188.4 426.3L199.6 421.6M188.4 426.3L201.5 427.6M188.4 426.3L203 433.6M188.4 426.3L203.9 439.2M188.4 426.3L204.1 444.2M188.4 426.3L203.7 448.6M188.4 426.3L202.8 451.9M188.4 426.3L201.3 454.3M188.4 426.3L199.3 455.5M188.4 426.3L196.9 455.6M188.4 426.3L194.2 454.6M188.4 426.3L191.4 452.5M188.4 426.3L188.5 449.5M188.4 426.3L185.6 445.6M188.4 426.3L182.8 441.1M188.4 426.3L180.3 436.0M188.4 426.3L178 430.6M188.4 426.3L176.2 425.1M188.4 426.3L174.8 419.5" stroke="#00fafc" stroke-width="0.9" stroke-opacity="0.95"/>
<polygon points="186.1,381.6 186.5,376.1 187.4,371.1 188.8,366.8 190.8,363.3 193.1,360.6 195.9,358.7 222.4,350.7 225.8,349.8 229.5,349.9 233.5,351.0 237.7,353.1 242.0,356.2 246.5,360.2 250.8,365.2 255.1,371.0 259.2,377.5 262.9,384.6 266.3,392.1 269.3,399.9 271.7,407.9 273.5,415.8 274.8,423.5 275.4,430.8 275.5,437.6 274.9,443.7 273.7,449.1 272.0,453.7 269.7,457.3 267.1,460.0 264.0,461.8 238.5,472.8 235.3,473.5 231.8,473.2 228.1,471.9 224.3,469.8 220.4,466.8 216.4,463.1 212.6,458.6 208.8,453.5 205.2,447.9 201.7,441.8 198.5,435.4 195.6,428.6 193.1,421.7 190.8,414.7 189.0,407.7 187.6,400.8 186.6,394.1 186.1,387.7" fill="#b00a12" fill-opacity="0.36" stroke="none"/>
<path d="M210.6 361.5L205.7 358.9M210.6 361.5L212.6 356.8M217.5 359.3L212.6 356.8M217.5 359.3L219.4 354.7M224.3 357.2L219.4 354.7M224.3 357.2L226.1 352.7M231 355.1L226.1 352.7M231 355.1L232.7 350.7M237.7 353.1L232.7 350.7M213.2 389.5L210.8 388.1M213.2 389.5L208.3 373.6M211.9 375.6L208.3 373.6M211.9 375.6L205.7 358.9M239.7 380.5L237.2 379.2M239.7 380.5L234.9 365.0M238.7 366.9L234.9 365.0M238.7 366.9L232.7 350.7M205.7 358.9L201.2 357.9M205.7 358.9L212.6 356.8M205.7 358.9L208 355.8M212.6 356.8L208 355.8M212.6 356.8L219.4 354.7M212.6 356.8L214.7 353.7M219.4 354.7L214.7 353.7M219.4 354.7L226.1 352.7M219.4 354.7L221.4 351.7M226.1 352.7L221.4 351.7M226.1 352.7L232.7 350.7M226.1 352.7L228 349.7M232.7 350.7L228 349.7M205.7 358.9L212.4 397.6M210.8 388.1L208.5 387.4M210.8 388.1L204.9 372.7M208.3 373.6L204.9 372.7M208.3 373.6L201.2 357.9M232.7 350.7L238.7 388.5M237.2 379.2L234.8 378.6M237.2 379.2L231.4 364.2M234.9 365L231.4 364.2M234.9 365L228 349.7M201.2 357.9L197.1 358.3M201.2 357.9L208 355.8M201.2 357.9L203.9 356.2M208 355.8L203.9 356.2M208 355.8L214.7 353.7M208 355.8L210.6 354.2M214.7 353.7L210.6 354.2M214.7 353.7L221.4 351.7M214.7 353.7L217.2 352.2M221.4 351.7L217.2 352.2M221.4 351.7L228 349.7M221.4 351.7L223.7 350.2M228 349.7L223.7 350.2M201.2 357.9L210.9 397.1M208.5 387.4L206.4 387.4M208.5 387.4L201.8 372.9M204.9 372.7L201.8 372.9M204.9 372.7L197.1 358.3M228 349.7L237.1 388.0M234.8 378.6L232.7 378.6M234.8 378.6L228.2 364.5M231.4 364.2L228.2 364.5M231.4 364.2L223.7 350.2M197.1 358.3L193.6 360.1M197.1 358.3L203.9 356.2M197.1 358.3L200.3 358.1M203.9 356.2L200.3 358.1M203.9 356.2L210.6 354.2M203.9 356.2L207 356.1M210.6 354.2L207 356.1M210.6 354.2L217.2 352.2M210.6 354.2L213.5 354.1M217.2 352.2L213.5 354.1M217.2 352.2L223.7 350.2M217.2 352.2L220 352.1M223.7 350.2L220 352.1M197.1 358.3L209.5 397.1M206.4 387.4L205.8 387.6M206.4 387.4L199.1 374.1M201.8 372.9L199.1 374.1M201.8 372.9L193.6 360.1M223.7 350.2L235.6 388.1M232.7 378.6L232 378.9M232.7 378.6L225.4 365.8M228.2 364.5L225.4 365.8M228.2 364.5L220 352.1M193.6 360.1L190.7 363.3M193.6 360.1L200.3 358.1M193.6 360.1L197.4 361.2M200.3 358.1L197.4 361.2M200.3 358.1L207 356.1M200.3 358.1L204 359.2M207 356.1L204 359.2M207 356.1L213.5 354.1M207 356.1L210.5 357.2M213.5 354.1L210.5 357.2M213.5 354.1L220 352.1M213.5 354.1L216.9 355.3M220 352.1L216.9 355.3M193.6 360.1L201 378.8M204.6 388.1L196.9 376.4M199.1 374.1L196.9 376.4M199.1 374.1L190.7 363.3M220 352.1L227.2 370.3M230.7 379.4L223 368.0M225.4 365.8L223 368.0M225.4 365.8L216.9 355.3M190.7 363.3L188.5 367.6M190.7 363.3L197.4 361.2M190.7 363.3L195.1 365.6M197.4 361.2L195.1 365.6M197.4 361.2L204 359.2M197.4 361.2L201.6 363.6M204 359.2L201.6 363.6M204 359.2L210.5 357.2M204 359.2L208.1 361.6M210.5 357.2L208.1 361.6M210.5 357.2L216.9 355.3M210.5 357.2L214.4 359.6M216.9 355.3L214.4 359.6M190.7 363.3L199 380.8M203.1 389.6L195.2 379.5M196.9 376.4L195.2 379.5M196.9 376.4L188.5 367.6M216.9 355.3L225 372.3M229.1 380.9L221.1 371.2M223 368L221.1 371.2M223 368L214.4 359.6M188.5 367.6L187 373.0M188.5 367.6L195.1 365.6M188.5 367.6L193.5 371.0M195.1 365.6L193.5 371.0M195.1 365.6L201.6 363.6M195.1 365.6L200 369.0M201.6 363.6L200 369.0M201.6 363.6L208.1 361.6M201.6 363.6L206.4 367.0M208.1 361.6L206.4 367.0M208.1 361.6L214.4 359.6M208.1 361.6L212.7 365.0M214.4 359.6L212.7 365.0M188.5 367.6L197.4 383.6M199.2 388.9L194 383.5M195.2 379.5L194 383.5M195.2 379.5L187 373.0M214.4 359.6L223.3 375.1M225.1 380.3L219.7 375.2M221.1 371.2L219.7 375.2M221.1 371.2L212.7 365.0M187 373L186.2 379.4M187 373L193.5 371.0M187 373L192.6 377.3M193.5 371L192.6 377.3M193.5 371L200 369.0M193.5 371L199.1 375.2M200 369L199.1 375.2M200 369L206.4 367.0M200 369L205.4 373.2M206.4 367L205.4 373.2M206.4 367L212.7 365.0M206.4 367L211.6 371.2M212.7 365L211.6 371.2M187 373L196.3 387.1M195.8 390.2L193.3 388.3M194 383.5L193.3 388.3M194 383.5L186.2 379.4M212.7 365L222.1 378.6M221.5 381.7L218.8 379.8M219.7 375.2L218.8 379.8M219.7 375.2L211.6 371.2M186.2 379.4L186 386.4M186.2 379.4L192.6 377.3M186.2 379.4L192.5 384.3M192.6 377.3L192.5 384.3M192.6 377.3L199.1 375.2M192.6 377.3L198.8 382.3M199.1 375.2L198.8 382.3M199.1 375.2L205.4 373.2M199.1 375.2L205.1 380.2M205.4 373.2L205.1 380.2M205.4 373.2L211.6 371.2M205.4 373.2L211.3 378.2M211.6 371.2L211.3 378.2M186.2 379.4L195.7 391.3M193.3 388.3L193.2 391.8M193.3 388.3L186 386.4M211.6 371.2L221.3 382.7M218.8 379.8L218.7 383.3M218.8 379.8L211.3 378.2M186 386.4L186.6 394.1M186 386.4L192.5 384.3M186 386.4L193 392.0M192.5 384.3L193 392.0M192.5 384.3L198.8 382.3M192.5 384.3L199.3 389.8M198.8 382.3L199.3 389.8M198.8 382.3L205.1 380.2M198.8 382.3L205.5 387.8M205.1 380.2L205.5 387.8M205.1 380.2L211.3 378.2M205.1 380.2L211.7 385.7M211.3 378.2L211.7 385.7M186 386.4L195.6 396.0M211.3 378.2L221 387.4M208.1 452.3L211 456.6M210.1 451.5L217.3 454.1M214.3 449.8L217.3 454.1M216.4 449L223.5 451.6M220.5 447.4L223.5 451.6M222.5 446.6L229.6 449.1M226.6 444.9L229.6 449.1M228.6 444.1L235.6 446.7M232.6 442.5L235.6 446.7M210.3 451.8L211 456.6M235 442L235.6 446.7M211 456.6L215.7 462.2M211 456.6L217.3 454.1M211 456.6L221.9 459.6M217.3 454.1L221.9 459.6M217.3 454.1L223.5 451.6M217.3 454.1L228.1 457.1M223.5 451.6L228.1 457.1M223.5 451.6L229.6 449.1M223.5 451.6L234.3 454.6M229.6 449.1L234.3 454.6M229.6 449.1L235.6 446.7M229.6 449.1L240.3 452.1M235.6 446.7L240.3 452.1M214.5 449.8L215.7 451.2M213.3 452.1L215.7 462.2M239.4 439.8L240.6 441.2M238.1 442.1L240.3 452.1M215.7 462.2L220.4 466.8M215.7 462.2L221.9 459.6M215.7 462.2L226.7 464.2M221.9 459.6L226.7 464.2M221.9 459.6L228.1 457.1M221.9 459.6L232.9 461.6M228.1 457.1L232.9 461.6M228.1 457.1L234.3 454.6M228.1 457.1L239.1 459.0M234.3 454.6L239.1 459.0M234.3 454.6L240.3 452.1M234.3 454.6L245.1 456.5M240.3 452.1L245.1 456.5M215.7 462.2L215.7 447.4M218 449.7L219.2 454.6M215.7 451.2L219.2 454.6M215.7 451.2L220.4 466.8M240.3 452.1L240.7 437.5M243.2 439.6L244.3 444.4M240.6 441.2L244.3 444.4M240.6 441.2L245.1 456.5" stroke="#c52532" stroke-width="1.25"/>
<path d="M210.6 361.5L217.5 359.3L224.3 357.2L231 355.1L237.7 353.1M210.6 361.5L214 398.5M237.7 353.1L240.3 389.4M220.4 466.8L225 470.3M220.4 466.8L226.7 464.2M220.4 466.8L231.4 467.6M226.7 464.2L231.4 467.6M226.7 464.2L232.9 461.6M226.7 464.2L237.7 464.9M232.9 461.6L237.7 464.9M232.9 461.6L239.1 459.0M232.9 461.6L243.8 462.3M239.1 459L243.8 462.3M239.1 459L245.1 456.5M239.1 459L250 459.7M245.1 456.5L250 459.7M220.4 466.8L218.8 450.4M219.6 447.1L222.8 457.1M219.2 454.6L222.8 457.1M219.2 454.6L225 470.3M245.1 456.5L244 440.3M244.9 437L247.9 446.8M244.3 444.4L247.9 446.8M244.3 444.4L250 459.7M225 470.3L229.6 472.5M225 470.3L231.4 467.6M225 470.3L236 469.8M231.4 467.6L236 469.8M231.4 467.6L237.7 464.9M231.4 467.6L242.3 467.1M237.7 464.9L242.3 467.1M237.7 464.9L243.8 462.3M237.7 464.9L248.5 464.4M243.8 462.3L248.5 464.4M243.8 462.3L250 459.7M243.8 462.3L254.7 461.8M250 459.7L254.7 461.8M225 470.3L222 452.6M222.3 448.7L226.2 458.7M222.8 457.1L226.2 458.7M222.8 457.1L229.6 472.5M250 459.7L247.2 442.4M247.7 438.5L251.4 448.3M247.9 446.8L251.4 448.3M247.9 446.8L254.7 461.8M229.6 472.5L233.9 473.5M229.6 472.5L236 469.8M229.6 472.5L240.4 470.7M236 469.8L240.4 470.7M236 469.8L242.3 467.1M236 469.8L246.7 468.0M242.3 467.1L246.7 468.0M242.3 467.1L248.5 464.4M242.3 467.1L253 465.3M248.5 464.4L253 465.3M248.5 464.4L254.7 461.8M248.5 464.4L259.2 462.6M254.7 461.8L259.2 462.6M229.6 472.5L225 454.0M222.7 444.7L229.4 459.2M226.2 458.7L229.4 459.2M226.2 458.7L233.9 473.5M254.7 461.8L250.4 443.7M248.2 434.6L254.8 448.7M251.4 448.3L254.8 448.7M251.4 448.3L259.2 462.6M233.9 473.5L237.9 473.0M233.9 473.5L240.4 470.7M233.9 473.5L244.4 470.2M240.4 470.7L244.4 470.2M240.4 470.7L246.7 468.0M240.4 470.7L250.8 467.4M246.7 468L250.8 467.4M246.7 468L253 465.3M246.7 468L257.1 464.7M253 465.3L257.1 464.7M253 465.3L259.2 462.6M253 465.3L263.3 462.0M259.2 462.6L263.3 462.0M233.9 473.5L227.9 454.5M226.1 444.7L226.8 444.6M224.8 445L232.3 458.8M229.4 459.2L232.3 458.8M229.4 459.2L237.9 473.0M259.2 462.6L253.3 444.1M251.7 434.5L252.4 434.4M250.4 434.8L257.9 448.2M254.8 448.7L257.9 448.2M254.8 448.7L263.3 462.0M237.9 473L241.4 471.1M237.9 473L244.4 470.2M237.9 473L248 468.3M244.4 470.2L248 468.3M244.4 470.2L250.8 467.4M244.4 470.2L254.4 465.5M250.8 467.4L254.4 465.5M250.8 467.4L257.1 464.7M250.8 467.4L260.8 462.7M257.1 464.7L260.8 462.7M257.1 464.7L263.3 462.0M257.1 464.7L267.1 460.0M263.3 462L267.1 460.0M237.9 473L223.1 435.1M226.8 444.6L228.4 443.5M226.8 444.6L234.9 457.2M232.3 458.8L234.9 457.2M232.3 458.8L241.4 471.1M263.3 462L248.8 425.2M252.4 434.4L254.2 433.2M252.4 434.4L260.6 446.6M257.9 448.2L260.6 446.6M257.9 448.2L267.1 460.0M241.4 471.1L244.4 467.8M241.4 471.1L248 468.3M241.4 471.1L251 464.9M248 468.3L251 464.9M248 468.3L254.4 465.5M248 468.3L257.5 462.1M254.4 465.5L257.5 462.1M254.4 465.5L260.8 462.7M254.4 465.5L263.9 459.4M260.8 462.7L263.9 459.4M260.8 462.7L267.1 460.0M260.8 462.7L270.2 456.7M267.1 460L270.2 456.7M241.4 471.1L224.2 434.4M228.4 443.5L229.8 441.7M228.4 443.5L237 454.6M234.9 457.2L237 454.6M234.9 457.2L244.4 467.8M267.1 460L250 424.4M254.2 433.2L255.7 431.4M254.2 433.2L262.9 443.9M260.6 446.6L262.9 443.9M260.6 446.6L270.2 456.7M244.4 467.8L246.6 463.0M244.4 467.8L251 464.9M244.4 467.8L253.3 460.2M251 464.9L253.3 460.2M251 464.9L257.5 462.1M251 464.9L259.9 457.4M257.5 462.1L259.9 457.4M257.5 462.1L263.9 459.4M257.5 462.1L266.3 454.7M263.9 459.4L266.3 454.7M263.9 459.4L270.2 456.7M263.9 459.4L272.7 451.9M270.2 456.7L272.7 451.9M244.4 467.8L225.1 433.1M229.8 441.7L230.9 439.2M229.8 441.7L238.7 451.0M237 454.6L238.7 451.0M237 454.6L246.6 463.0M270.2 456.7L250.9 423.1M255.7 431.4L256.8 429.0M255.7 431.4L264.7 440.3M262.9 443.9L264.7 440.3M262.9 443.9L272.7 451.9M246.6 463L248.2 457.0M246.6 463L253.3 460.2M246.6 463L254.9 454.2M253.3 460.2L254.9 454.2M253.3 460.2L259.9 457.4M253.3 460.2L261.5 451.4M259.9 457.4L261.5 451.4M259.9 457.4L266.3 454.7M259.9 457.4L268 448.7M266.3 454.7L268 448.7M266.3 454.7L272.7 451.9M266.3 454.7L274.5 446.0M272.7 451.9L274.5 446.0M246.6 463L225.7 431.5M230.9 439.2L231.5 436.1M230.9 439.2L239.7 446.4M238.7 451L239.7 446.4M238.7 451L248.2 457.0M272.7 451.9L251.7 421.5M256.8 429L257.6 425.9M256.8 429L265.9 435.8M264.7 440.3L265.9 435.8M264.7 440.3L274.5 446.0M248.2 457L248.9 449.8M248.2 457L254.9 454.2M248.2 457L255.6 447.0M254.9 454.2L255.6 447.0M254.9 454.2L261.5 451.4M254.9 454.2L262.3 444.2M261.5 451.4L262.3 444.2M261.5 451.4L268 448.7M261.5 451.4L268.9 441.5M268 448.7L268.9 441.5M268 448.7L274.5 446.0M268 448.7L275.4 438.8M274.5 446L275.4 438.8M248.2 457L226.1 429.4M231.5 436.1L231.8 432.6M231.5 436.1L240.2 441.0M239.7 446.4L240.2 441.0M239.7 446.4L248.9 449.8M274.5 446L252.2 419.5M257.6 425.9L258 422.4M257.6 425.9L266.6 430.5M265.9 435.8L266.6 430.5M265.9 435.8L275.4 438.8M248.9 449.8L248.7 441.6M248.9 449.8L255.6 447.0M248.9 449.8L255.5 438.8M255.6 447L255.5 438.8M255.6 447L262.3 444.2M255.6 447L262.3 436.1M262.3 444.2L262.3 436.1M262.3 444.2L268.9 441.5M262.3 444.2L268.9 433.4M268.9 441.5L268.9 433.4M268.9 441.5L275.4 438.8M268.9 441.5L275.4 430.8M275.4 438.8L275.4 430.8M248.9 449.8L226.3 427.0M231.8 432.6L231.7 428.5M231.8 432.6L240 434.9M240.2 441L240 434.9M240.2 441L248.7 441.6M275.4 438.8L252.4 417.1M258 422.4L258 418.4M258 422.4L266.6 424.5M266.6 430.5L266.6 424.5M266.6 430.5L275.4 430.8M248.7 441.6L247.7 432.6M248.7 441.6L255.5 438.8M248.7 441.6L254.6 429.8M255.5 438.8L254.6 429.8M255.5 438.8L262.3 436.1M255.5 438.8L261.3 427.2M262.3 436.1L261.3 427.2M262.3 436.1L268.9 433.4M262.3 436.1L268 424.5M268.9 433.4L268 424.5M268.9 433.4L275.4 430.8M268.9 433.4L274.6 421.9M275.4 430.8L274.6 421.9M248.7 441.6L226.2 424.4M228.5 423.5L231.1 424.1M231.7 428.5L231.1 424.1M231.7 428.5L239.2 428.3M240 434.9L239.2 428.3M240 434.9L247.7 432.6M275.4 430.8L252.4 414.5M254.8 413.6L257.5 414.1M258 418.4L257.5 414.1M258 418.4L265.9 418.0M266.6 424.5L265.9 418.0M266.6 424.5L274.6 421.9M247.7 432.6L245.8 423.0M247.7 432.6L254.6 429.8M247.7 432.6L252.7 420.4M254.6 429.8L252.7 420.4M254.6 429.8L261.3 427.2M254.6 429.8L259.5 417.8M261.3 427.2L259.5 417.8M261.3 427.2L268 424.5M261.3 427.2L266.2 415.2M268 424.5L266.2 415.2M268 424.5L274.6 421.9M268 424.5L272.9 412.6M274.6 421.9L272.9 412.6M247.7 432.6L225.8 421.5M227.8 419.7L230.2 419.5M231.1 424.1L230.2 419.5M231.1 424.1L237.8 421.2M239.2 428.3L237.8 421.2M239.2 428.3L245.8 423.0M274.6 421.9L252.1 411.6M254.2 409.9L256.6 409.6M257.5 414.1L256.6 409.6M257.5 414.1L264.6 411.1M265.9 418L264.6 411.1M265.9 418L272.9 412.6M245.8 423L243.1 413.3M245.8 423L252.7 420.4M245.8 423L250 410.7M252.7 420.4L250 410.7M252.7 420.4L259.5 417.8M252.7 420.4L256.9 408.1M259.5 417.8L256.9 408.1M259.5 417.8L266.2 415.2M259.5 417.8L263.6 405.6M266.2 415.2L263.6 405.6M266.2 415.2L272.9 412.6M266.2 415.2L270.3 403.1M272.9 412.6L270.3 403.1M245.8 423L225.2 418.4M226.8 415.9L228.8 414.8M230.2 419.5L228.8 414.8M230.2 419.5L235.8 414.1M237.8 421.2L235.8 414.1M237.8 421.2L243.1 413.3M272.9 412.6L251.5 408.7M253.2 406.1L255.4 405.0M256.6 409.6L255.4 405.0M256.6 409.6L262.7 404.1M264.6 411.1L262.7 404.1M264.6 411.1L270.3 403.1M243.1 413.3L239.7 403.5M243.1 413.3L250 410.7M243.1 413.3L246.6 401.0M250 410.7L246.6 401.0M250 410.7L256.9 408.1M250 410.7L253.5 398.5M256.9 408.1L253.5 398.5M256.9 408.1L263.6 405.6M256.9 408.1L260.3 396.1M263.6 405.6L260.3 396.1M263.6 405.6L270.3 403.1M263.6 405.6L267 393.7M270.3 403.1L267 393.7M243.1 413.3L224.3 415.3M225.5 412L227.2 410.2M228.8 414.8L227.2 410.2M228.8 414.8L233.3 406.9M235.8 414.1L233.3 406.9M235.8 414.1L239.7 403.5M270.3 403.1L250.7 405.7M251.9 402.3L253.8 400.5M255.4 405L253.8 400.5M255.4 405L260.2 397.2M262.7 404.1L260.2 397.2M262.7 404.1L267 393.7M239.7 403.5L235.6 394.2M239.7 403.5L246.6 401.0M239.7 403.5L242.6 391.7M246.6 401L242.6 391.7M246.6 401L253.5 398.5M246.6 401L249.5 389.3M253.5 398.5L249.5 389.3M253.5 398.5L260.3 396.1M253.5 398.5L256.2 386.9M260.3 396.1L256.2 386.9M260.3 396.1L267 393.7M260.3 396.1L262.9 384.6M267 393.7L262.9 384.6M239.7 403.5L223.2 412.3M223.9 408.2L225.2 405.7M227.2 410.2L225.2 405.7M227.2 410.2L230.3 400.0M233.3 406.9L230.3 400.0M233.3 406.9L235.6 394.2M267 393.7L249.6 402.7M250.4 398.7L251.8 396.1M253.8 400.5L251.8 396.1M253.8 400.5L257.3 390.5M260.2 397.2L257.3 390.5M260.2 397.2L262.9 384.6M235.6 394.2L231 385.5M235.6 394.2L242.6 391.7M235.6 394.2L238 383.1M242.6 391.7L238 383.1M242.6 391.7L249.5 389.3M242.6 391.7L244.9 380.7M249.5 389.3L244.9 380.7M249.5 389.3L256.2 386.9M249.5 389.3L251.7 378.4M256.2 386.9L251.7 378.4M256.2 386.9L262.9 384.6M256.2 386.9L258.4 376.1M262.9 384.6L258.4 376.1M235.6 394.2L222 409.3M222.1 404.7L223 401.4M225.2 405.7L223 401.4M225.2 405.7L226.9 393.6M230.3 400L226.9 393.6M230.3 400L231 385.5M262.9 384.6L248.3 399.8M248.6 395.3L249.7 392.0M251.8 396.1L249.7 392.0M251.8 396.1L253.9 384.2M257.3 390.5L253.9 384.2M257.3 390.5L258.4 376.1M231 385.5L226 377.6M231 385.5L238 383.1M231 385.5L233 375.3M238 383.1L233 375.3M238 383.1L244.9 380.7M238 383.1L239.9 373.0M244.9 380.7L239.9 373.0M244.9 380.7L251.7 378.4M244.9 380.7L246.7 370.8M251.7 378.4L246.7 370.8M251.7 378.4L258.4 376.1M251.7 378.4L253.4 368.6M258.4 376.1L253.4 368.6M231 385.5L220.5 406.5M223 401.4L220.7 397.6M223 401.4L223.3 387.8M226.9 393.6L223.3 387.8M226.9 393.6L226 377.6M258.4 376.1L246.9 397.1M249.7 392L247.3 388.3M249.7 392L250.3 378.6M253.9 384.2L250.3 378.6M253.9 384.2L253.4 368.6M226 377.6L220.9 370.9M226 377.6L233 375.3M226 377.6L227.9 368.7M233 375.3L227.9 368.7M233 375.3L239.9 373.0M233 375.3L234.7 366.5M239.9 373L234.7 366.5M239.9 373L246.7 370.8M239.9 373L241.5 364.3M246.7 370.8L241.5 364.3M246.7 370.8L253.4 368.6M246.7 370.8L248.2 362.1M253.4 368.6L248.2 362.1M226 377.6L219 404.0M220.7 397.6L218.2 394.3M220.7 397.6L219.5 382.8M223.3 387.8L219.5 382.8M223.3 387.8L220.9 370.9M253.4 368.6L245.3 394.6M247.3 388.3L244.8 385.1M247.3 388.3L246.5 373.8M250.3 378.6L246.5 373.8M250.3 378.6L248.2 362.1M220.9 370.9L215.7 365.5M220.9 370.9L227.9 368.7M220.9 370.9L222.6 363.3M227.9 368.7L222.6 363.3M227.9 368.7L234.7 366.5M227.9 368.7L229.5 361.1M234.7 366.5L229.5 361.1M234.7 366.5L241.5 364.3M234.7 366.5L236.3 359.0M241.5 364.3L236.3 359.0M241.5 364.3L248.2 362.1M241.5 364.3L242.9 356.9M248.2 362.1L242.9 356.9M220.9 370.9L217.3 401.8M218.2 394.3L215.7 391.6M218.2 394.3L215.7 378.7M219.5 382.8L215.7 378.7M219.5 382.8L215.7 365.5M248.2 362.1L243.7 392.5M244.8 385.1L242.2 382.5M244.8 385.1L242.6 369.9M246.5 373.8L242.6 369.9M246.5 373.8L242.9 356.9M215.7 365.5L210.6 361.5M215.7 365.5L222.6 363.3M215.7 365.5L217.5 359.3M222.6 363.3L217.5 359.3M222.6 363.3L229.5 361.1M222.6 363.3L224.3 357.2M229.5 361.1L224.3 357.2M229.5 361.1L236.3 359.0M229.5 361.1L231 355.1M236.3 359L231 355.1M236.3 359L242.9 356.9M236.3 359L237.7 353.1M242.9 356.9L237.7 353.1M215.7 365.5L215.7 399.9M215.7 391.6L213.2 389.5M215.7 391.6L211.9 375.6M215.7 378.7L211.9 375.6M215.7 378.7L210.6 361.5M242.9 356.9L242 390.7M242.2 382.5L239.7 380.5M242.2 382.5L238.7 366.9M242.6 369.9L238.7 366.9M242.6 369.9L237.7 353.1" stroke="#b2060e" stroke-width="1.25"/>
<path d="M205 301.7L192.7 297.3M233.5 294.6L220.7 290.5M205 301.7L220.7 290.5M210.6 361.5L204.5 358.5M237.7 353.1L231.4 350.3M210.6 361.5L231.4 350.3M210.6 361.5L192.7 297.3M237.7 353.1L220.7 290.5M192.7 297.3L182.1 297.9M220.7 290.5L209.5 291.3M192.7 297.3L220.7 290.5M192.7 297.3L209.5 291.3M204.5 358.5L199.1 357.9M231.4 350.3L225.8 349.8M204.5 358.5L231.4 350.3M204.5 358.5L225.8 349.8M204.5 358.5L192.7 297.3M204.5 358.5L182.1 297.9M231.4 350.3L220.7 290.5M231.4 350.3L209.5 291.3M182.1 297.9L173.3 302.9M209.5 291.3L200.2 296.4M182.1 297.9L209.5 291.3M182.1 297.9L200.2 296.4M199.1 357.9L194.5 359.5M225.8 349.8L220.9 351.5M199.1 357.9L225.8 349.8M199.1 357.9L220.9 351.5M199.1 357.9L182.1 297.9M199.1 357.9L173.3 302.9M225.8 349.8L209.5 291.3M225.8 349.8L200.2 296.4M173.3 302.9L166.6 311.9M200.2 296.4L192.9 305.3M173.3 302.9L200.2 296.4M173.3 302.9L192.9 305.3M194.5 359.5L190.7 363.3M220.9 351.5L216.9 355.3M194.5 359.5L220.9 351.5M194.5 359.5L216.9 355.3M194.5 359.5L173.3 302.9M194.5 359.5L166.6 311.9M220.9 351.5L200.2 296.4M220.9 351.5L192.9 305.3M166.6 311.9L162.1 324.2M192.9 305.3L187.8 317.5M166.6 311.9L192.9 305.3M166.6 311.9L187.8 317.5M190.7 363.3L188.1 368.9M216.9 355.3L213.9 360.9M190.7 363.3L216.9 355.3M190.7 363.3L213.9 360.9M190.7 363.3L166.6 311.9M190.7 363.3L162.1 324.2M216.9 355.3L192.9 305.3M216.9 355.3L187.8 317.5M162.1 324.2L159.7 339.1M187.8 317.5L184.8 332.2M162.1 324.2L187.8 317.5M162.1 324.2L184.8 332.2M188.1 368.9L186.5 376.1M213.9 360.9L212.1 368.0M188.1 368.9L213.9 360.9M188.1 368.9L212.1 368.0M188.1 368.9L162.1 324.2M188.1 368.9L159.7 339.1M213.9 360.9L187.8 317.5M213.9 360.9L184.8 332.2M159.7 339.1L159.3 356.0M184.8 332.2L184 348.9M159.7 339.1L184.8 332.2M159.7 339.1L184 348.9M186.5 376.1L186 384.6M212.1 368L211.3 376.4M186.5 376.1L212.1 368.0M186.5 376.1L211.3 376.4M186.5 376.1L159.7 339.1M186.5 376.1L159.3 356.0M212.1 368L184.8 332.2M212.1 368L184 348.9M159.3 356L160.8 374.4M184 348.9L185.1 366.9M159.3 356L184 348.9M159.3 356L185.1 366.9M186 384.6L186.6 394.1M211.3 376.4L211.7 385.7M186 384.6L211.3 376.4M186 384.6L211.7 385.7M186 384.6L159.3 356.0M186 384.6L160.8 374.4M211.3 376.4L184 348.9M211.3 376.4L185.1 366.9M160.8 374.4L164.2 393.7M185.1 366.9L188.1 385.9M160.8 374.4L185.1 366.9M160.8 374.4L188.1 385.9M186.6 394.1L160.8 374.4M186.6 394.1L164.2 393.7M211.7 385.7L185.1 366.9M211.7 385.7L188.1 385.9M164.2 393.7L169.2 413.3M188.1 385.9L189.3 390.7M164.2 393.7L188.1 385.9M164.2 393.7L178.7 399.5M175.8 398.8L164.2 393.7M173.7 411.2L169.2 413.3M200.2 390.6L188.1 385.9M169.2 413.3L175.7 432.9M169.2 413.3L175.2 411.2M169.2 413.3L176.9 416.1M174.4 413.6L169.2 413.3M179.3 428.6L175.7 432.9L183.6 451.9M180.1 431.1L175.7 432.9M186.1 445.6L183.6 451.9L192.6 470.0M211.4 451.6L215.9 460.4M183.6 451.9L189.5 449.6M183.6 451.9L215.9 460.4M187.2 448L183.6 451.9M195.5 453.2L192.6 470.0M219.4 443.7L215.9 460.4M192.6 470L202.6 486.6M215.9 460.4L226 476.5M192.6 470L215.9 460.4M192.6 470L226 476.5M207.4 451.3L208.8 453.5M232 441.6L233.3 443.7M226 444L233.3 443.7M197.9 457.8L192.6 470.0M203.2 455.7L202.6 486.6M221.8 448.3L215.9 460.4M227.4 446L226 476.5M202.6 486.6L213.4 501.2M226 476.5L236.9 490.7M202.6 486.6L226 476.5M202.6 486.6L236.9 490.7M208.8 453.5L214.5 460.9M233.3 443.7L239.1 450.8M208.8 453.5L233.3 443.7M208.8 453.5L239.1 450.8M208.8 453.5L202.6 486.6M208.8 453.5L213.4 501.2M233.3 443.7L226 476.5M233.3 443.7L236.9 490.7M213.4 501.2L224.7 513.5M236.9 490.7L248.5 502.4M213.4 501.2L236.9 490.7M213.4 501.2L248.5 502.4M214.5 460.9L220.4 466.8M239.1 450.8L245.1 456.5M214.5 460.9L239.1 450.8M214.5 460.9L245.1 456.5M214.5 460.9L213.4 501.2M214.5 460.9L224.7 513.5M239.1 450.8L236.9 490.7M239.1 450.8L248.5 502.4" stroke="#43242b" stroke-width="1.3"/>
<path d="M205 301.7L233.5 294.6M210.6 361.5L237.7 353.1M210.6 361.5L205 301.7M237.7 353.1L233.5 294.6M224.7 513.5L236.2 522.7M248.5 502.4L260.2 511.2M224.7 513.5L248.5 502.4M224.7 513.5L260.2 511.2M220.4 466.8L226.2 471.0M245.1 456.5L251.1 460.4M220.4 466.8L245.1 456.5M220.4 466.8L251.1 460.4M220.4 466.8L224.7 513.5M220.4 466.8L236.2 522.7M245.1 456.5L248.5 502.4M245.1 456.5L260.2 511.2M236.2 522.7L247.5 528.5M260.2 511.2L271.9 516.5M236.2 522.7L260.2 511.2M236.2 522.7L271.9 516.5M226.2 471L231.8 473.2M251.1 460.4L257 462.4M226.2 471L251.1 460.4M226.2 471L257 462.4M226.2 471L236.2 522.7M226.2 471L247.5 528.5M251.1 460.4L260.2 511.2M251.1 460.4L271.9 516.5M247.5 528.5L258.3 530.3M271.9 516.5L283.2 517.9M247.5 528.5L271.9 516.5M247.5 528.5L283.2 517.9M231.8 473.2L236.9 473.2M257 462.4L262.3 462.3M231.8 473.2L257 462.4M231.8 473.2L262.3 462.3M231.8 473.2L247.5 528.5M231.8 473.2L258.3 530.3M257 462.4L271.9 516.5M257 462.4L283.2 517.9M258.3 530.3L268 527.7M283.2 517.9L293.4 515.0M258.3 530.3L283.2 517.9M258.3 530.3L293.4 515.0M236.9 473.2L241.4 471.1M262.3 462.3L267.1 460.0M236.9 473.2L262.3 462.3M236.9 473.2L267.1 460.0M236.9 473.2L258.3 530.3M236.9 473.2L268 527.7M262.3 462.3L283.2 517.9M262.3 462.3L293.4 515.0M268 527.7L276.2 520.4M293.4 515L302.1 507.5M268 527.7L293.4 515.0M268 527.7L302.1 507.5M241.4 471.1L245 466.7M267.1 460L270.9 455.6M241.4 471.1L267.1 460.0M241.4 471.1L270.9 455.6M241.4 471.1L268 527.7M241.4 471.1L276.2 520.4M267.1 460L293.4 515.0M267.1 460L302.1 507.5M276.2 520.4L282.4 508.2M302.1 507.5L308.8 495.3M276.2 520.4L302.1 507.5M276.2 520.4L308.8 495.3M245 466.7L247.5 460.2M270.9 455.6L273.7 449.1M245 466.7L270.9 455.6M245 466.7L273.7 449.1M245 466.7L276.2 520.4M245 466.7L282.4 508.2M270.9 455.6L302.1 507.5M270.9 455.6L308.8 495.3M282.4 508.2L286 491.4M308.8 495.3L313 478.7M282.4 508.2L308.8 495.3M282.4 508.2L313 478.7M247.5 460.2L248.8 451.7M273.7 449.1L275.2 440.7M247.5 460.2L273.7 449.1M247.5 460.2L275.2 440.7M247.5 460.2L282.4 508.2M247.5 460.2L286 491.4M273.7 449.1L308.8 495.3M273.7 449.1L313 478.7M286 491.4L286.7 470.5M313 478.7L314.2 458.1M286 491.4L313 478.7M286 491.4L314.2 458.1M248.8 451.7L248.7 441.6M275.2 440.7L275.4 430.8M248.8 451.7L275.2 440.7M248.8 451.7L275.4 430.8M248.8 451.7L286 491.4M248.8 451.7L286.7 470.5M275.2 440.7L313 478.7M275.2 440.7L314.2 458.1M286.7 470.5L284.2 446.4M314.2 458.1L312.2 434.5M286.7 470.5L314.2 458.1M286.7 470.5L312.2 434.5M248.7 441.6L247.3 430.2M275.4 430.8L274.2 419.7M248.7 441.6L275.4 430.8M248.7 441.6L274.2 419.7M248.7 441.6L286.7 470.5M248.7 441.6L284.2 446.4M275.4 430.8L314.2 458.1M275.4 430.8L312.2 434.5M284.2 446.4L278.5 420.3M312.2 434.5L307 409.1M284.2 446.4L312.2 434.5M284.2 446.4L307 409.1M247.3 430.2L244.5 418.2M274.2 419.7L271.7 407.9M247.3 430.2L274.2 419.7M247.3 430.2L271.7 407.9M247.3 430.2L284.2 446.4M247.3 430.2L278.5 420.3M274.2 419.7L312.2 434.5M274.2 419.7L307 409.1M278.5 420.3L270 393.7M307 409.1L298.7 383.3M278.5 420.3L307 409.1M278.5 420.3L298.7 383.3M244.5 418.2L240.6 406.0M271.7 407.9L267.9 396.0M244.5 418.2L271.7 407.9M244.5 418.2L267.9 396.0M244.5 418.2L278.5 420.3M244.5 418.2L270 393.7M271.7 407.9L307 409.1M271.7 407.9L298.7 383.3M270 393.7L259 368.2M298.7 383.3L288 358.6M270 393.7L298.7 383.3M270 393.7L288 358.6M240.6 406L235.6 394.2M267.9 396L262.9 384.6M240.6 406L267.9 396.0M240.6 406L262.9 384.6M240.6 406L270 393.7M240.6 406L259 368.2M267.9 396L298.7 383.3M267.9 396L288 358.6M259 368.2L246.2 345.2M288 358.6L275.3 336.3M259 368.2L288 358.6M259 368.2L275.3 336.3M235.6 394.2L229.8 383.4M262.9 384.6L257.2 374.2M235.6 394.2L262.9 384.6M235.6 394.2L257.2 374.2M235.6 394.2L259 368.2M235.6 394.2L246.2 345.2M262.9 384.6L288 358.6M262.9 384.6L275.3 336.3M246.2 345.2L232.4 325.9M275.3 336.3L261.4 317.8M246.2 345.2L275.3 336.3M246.2 345.2L261.4 317.8M229.8 383.4L223.5 374.1M257.2 374.2L250.8 365.2M229.8 383.4L257.2 374.2M229.8 383.4L250.8 365.2M229.8 383.4L246.2 345.2M229.8 383.4L232.4 325.9M257.2 374.2L275.3 336.3M257.2 374.2L261.4 317.8M232.4 325.9L218.5 311.3M261.4 317.8L247.2 303.7M232.4 325.9L261.4 317.8M232.4 325.9L247.2 303.7M223.5 374.1L217 366.7M250.8 365.2L244.2 358.1M223.5 374.1L250.8 365.2M223.5 374.1L244.2 358.1M223.5 374.1L232.4 325.9M223.5 374.1L218.5 311.3M250.8 365.2L261.4 317.8M250.8 365.2L247.2 303.7M218.5 311.3L205 301.7M247.2 303.7L233.5 294.6M218.5 311.3L247.2 303.7M218.5 311.3L233.5 294.6M217 366.7L210.6 361.5M244.2 358.1L237.7 353.1M217 366.7L244.2 358.1M217 366.7L237.7 353.1M217 366.7L218.5 311.3M217 366.7L205 301.7M244.2 358.1L247.2 303.7M244.2 358.1L233.5 294.6" stroke="#040404" stroke-width="1.3"/>
<polygon points="173.5,407.8 173.7,405.0 174.1,402.5 174.8,400.4 175.7,398.8 176.8,397.5 178.2,396.8 204.5,388.0 206.1,387.7 207.9,388.0 209.8,388.7 211.8,389.9 213.9,391.6 216.0,393.8 218.1,396.4 220.1,399.3 222.1,402.6 223.9,406.2 225.5,409.9 227.0,413.8 228.2,417.7 229.2,421.6 229.9,425.4 230.3,429.0 230.4,432.4 230.3,435.5 229.9,438.3 229.2,440.6 228.3,442.5 227.1,444.0 225.7,445.0 200.0,455.2 198.5,455.7 196.9,455.6 195.2,455.1 193.3,454.0 191.4,452.5 189.4,450.6 187.5,448.3 185.6,445.6 183.7,442.7 181.9,439.5 180.3,436.0 178.7,432.5 177.4,428.8 176.2,425.1 175.2,421.4 174.4,417.7 173.9,414.2 173.6,410.9" fill="url(#dots2)" fill-opacity="0.78" stroke="none"/>
<path d="M393.8 100.9L900 141.4M-50 129.2L393.8 100.9L246.9 760.0M900 398L-50 356.7" stroke="#d2da32" stroke-width="1.35"/>
<path d="M900 283.6L736.1 692.2L684.9 760.0M577.9 0L79.5 760.0M736.1 692.2L-50 70.4" stroke="#fa80a0" stroke-width="1.35"/>
<path d="M96.8 760L32.9 634.8L-50 343.3M141.8 0L531.1 760.0M761.7 0L32.9 634.8" stroke="#84bafa" stroke-width="1.35"/>
<path d="M206.7 466L177.1 439.9M458.3 362.5L423.6 347.5M201 411.1L170.5 387.5M462.4 318.2L426.4 304.9M206.7 466L201 411.1M458.3 362.5L462.4 318.2M177.1 439.9L170.5 387.5M423.6 347.5L426.4 304.9M206.7 466L458.3 362.5M201 411.1L462.4 318.2M177.1 439.9L423.6 347.5M170.5 387.5L426.4 304.9" stroke="#ffec1c" stroke-width="1.35"/>
<polygon points="334.5,366.7 321.2,359.6 337.4,354.0 350.8,360.8" fill="#00ff00" fill-opacity="0.35" stroke="none"/>
<polygon points="326.1,359.9 312.8,352.8 312.5,333.2 326.0,339.9" fill="#1414ff" fill-opacity="0.55" stroke="none"/>
<polygon points="341.5,360.5 341.6,340.5 358.2,334.9 357.9,354.7" fill="#d23c46" fill-opacity="0.72" stroke="none"/>
<line x1="333.1" y1="373.4" x2="290.1" y2="350.1" stroke="#ff0000" stroke-width="2.2"/>
<line x1="333.1" y1="373.4" x2="386.1" y2="354.0" stroke="#0000ff" stroke-width="2.3"/>
<line x1="333.1" y1="373.4" x2="333.0" y2="304.7" stroke="#00ff00" stroke-width="2.7"/>
<polygon points="282.3,345.8 291.1,344.9 292.2,345.1 293.1,345.6 293.9,346.4 294.3,347.4 294.5,348.7 294.4,350.0 294.0,351.3 293.3,352.6 292.5,353.6 291.4,354.5 290.3,355.0 289.2,355.2 288.1,355.1 287.1,354.6 286.4,353.8" fill="#ff0000" fill-opacity="1" stroke="none"/>
<polygon points="378.5,402.5 378.7,401.0 379.2,399.4 380.0,398.0 381.0,396.7 382.1,395.7 383.4,395.0 384.5,394.7 385.6,394.8 386.6,395.3 387.2,396.1 394.2,406.5 381.8,406.4 380.6,406.3 379.7,405.9 379.0,405.0 378.6,403.9" fill="#ff0000" fill-opacity="1" stroke="none"/>
<polygon points="382.3,352.2 382.5,351.0 382.9,349.9 383.6,349.2 384.4,348.8 385.3,348.7 395.9,350.4 389.3,358.0 388.6,358.8 387.8,359.2 386.9,359.2 385.9,358.9 384.9,358.3 384.1,357.4 383.3,356.2 382.7,354.9 382.4,353.6" fill="#0000ff" fill-opacity="1" stroke="none"/>
<polygon points="259.8,400.2 270.1,389.9 270.8,389.5 271.6,389.5 272.6,389.9 273.5,390.7 274.4,391.8 275.2,393.1 275.8,394.6 276.2,396.2 276.4,397.7 276.3,399.1 276.0,400.1 275.5,400.9 274.8,401.3 274.0,401.3" fill="#0000ff" fill-opacity="1" stroke="none"/>
<polygon points="326.9,304.5 333.0,290.1 339.0,304.3 339.1,304.9 338.8,305.4 338.0,305.9 336.9,306.4 335.5,306.7 334.0,306.8 332.4,306.8 330.8,306.7 329.4,306.4 328.2,306.1 327.4,305.6 326.9,305.0" fill="#00ff00" fill-opacity="1" stroke="none"/>
<polygon points="327.6,435.3 327.9,434.6 328.6,433.9 329.6,433.3 330.8,432.9 332.2,432.7 333.7,432.7 335.1,432.8 336.3,433.2 337.4,433.7 338.2,434.4 338.6,435.1 338.6,435.9 338.3,436.6 333.1,447.3 327.6,436.1" fill="#00ff00" fill-opacity="1" stroke="none"/>
<polygon points="326.2,375.9 327.6,370.4 333.1,365.5 339.8,370.9 338.6,376.4 333.1,381.2" fill="#ff7a90" fill-opacity="0.8" stroke="none"/>
<circle cx="736.3" cy="604.5" r="8.0" fill="#e58aa6" fill-opacity="0.85"/>
<circle cx="781.4" cy="606.2" r="8.0" fill="#86b5ec" fill-opacity="0.85"/>
<circle cx="756.9" cy="643.4" r="6.2" fill="#a8ad55" fill-opacity="0.85"/>
<line x1="756.8" y1="614.8" x2="741.500" y2="607" stroke="#ff3653" stroke-width="2.200"/>
<line x1="756.8" y1="614.8" x2="776" y2="608.300" stroke="#2c8fff" stroke-width="2.200"/>
<line x1="756.8" y1="614.8" x2="756.900" y2="593" stroke="#8adb00" stroke-width="2.200"/>
<circle cx="732.1" cy="624.2" r="6.3" fill="#6cb8ff" fill-opacity="1"/>
<circle cx="777.2" cy="625.9" r="6.3" fill="#ff6e90" fill-opacity="1"/>
<circle cx="756.9" cy="586.5" r="8.2" fill="#b4e000" fill-opacity="1"/>
<text x="756.900" y="591" font-size="12.500" text-anchor="middle" fill="#333" font-family="Liberation Sans, sans-serif">Y</text>
<text x="736.300" y="609" font-size="12.500" text-anchor="middle" fill="#9a8590" font-family="Liberation Sans, sans-serif">X</text>
<text x="781.400" y="610.700" font-size="12.500" text-anchor="middle" fill="#8090a8" font-family="Liberation Sans, sans-serif">Z</text></svg>
<div class="abs" style="left:677px;top:10px;width:133px;height:21px;background:#dddddd;color:#5a5a5a;font-size:13.33px;line-height:21px;padding-left:6px">PERSPECTIVE</div>
<svg class="abs" style="left:796px;top:15px" width="12" height="10" viewBox="0 0 12 10"><path d="M2 2.8L6 6.8L10 2.8" fill="none" stroke="#333" stroke-width="1.8"/></svg>
<div class="abs" style="left:703px;top:40px;width:107px;height:34px;background:#fff;border-radius:6px;box-shadow:0 1px 2px rgba(0,0,0,.3)"></div>
<svg class="abs" style="left:710px;top:47.5px" width="20" height="20" viewBox="0 0 24 24"><path fill="#111" d="M10 9h4V6h3l-5-5-5 5h3v3zm-1 1H6V7l-5 5 5 5v-3h3v-4zm14 2l-5-5v3h-3v4h3v3l5-5zm-9 3h-4v3H7l5 5 5-5h-3v-3z"/></svg>
<svg class="abs" style="left:744px;top:47.5px" width="20" height="20" viewBox="0 0 24 24"><path fill="none" stroke="#111" stroke-width="1.9" d="M9.5 16.2C6 15.6 3.6 14 3.6 12.1c0-2.4 3.8-4.3 8.4-4.3s8.400 1.900 8.400 4.300c0 1.900-2.300 3.400-5.600 4"/><path fill="#111" d="M9 12.600v7.200l4.100-3.600z"/></svg>
<svg class="abs" style="left:778px;top:47.5px" width="20" height="20" viewBox="0 0 24 24"><path fill="#b9b9b9" d="M22 18v-2H8V4h2L7 1 4 4h2v2H2v2h4v8c0 1.100.900 2 2 2h8v2h-2l3 3 3-3h-2v-2h4zM10 8h6v6h2V8c0-1.100-.900-2-2-2h-6v2z"/></svg>
</div>
<div id="split" class="abs"></div>
<div id="vbot" class="abs"><svg width="820" height="417" viewBox="0 684 820 417" fill="none" style="position:absolute;left:0;top:0;display:block">
<rect x="256.55" y="912.75" width="152.90" height="152.90" fill="#cc0000"/>
<rect x="271.84" y="928.04" width="122.32" height="122.32" fill="#0078ff"/>
<rect x="271.84" y="1050.36" width="30.58" height="15.29" fill="#000"/>
<rect x="363.58" y="1050.36" width="30.58" height="15.29" fill="#000"/>
<rect x="302.42" y="1050.36" width="61.16" height="15.29" fill="#aa0000"/>
<path d="M11.91 684V1101M27.20 684V1101M42.49 684V1101M57.78 684V1101M73.07 684V1101M88.36 684V1101M118.94 684V1101M134.23 684V1101M149.52 684V1101M164.81 684V1101M180.10 684V1101M195.39 684V1101M210.68 684V1101M225.97 684V1101M241.26 684V1101M271.84 684V1101M287.13 684V1101M302.42 684V1101M317.71 684V1101M333.00 684V1101M348.29 684V1101M363.58 684V1101M378.87 684V1101M394.16 684V1101M424.74 684V1101M440.03 684V1101M455.32 684V1101M470.61 684V1101M485.90 684V1101M501.19 684V1101M516.48 684V1101M531.77 684V1101M547.06 684V1101M577.64 684V1101M592.93 684V1101M608.22 684V1101M623.51 684V1101M638.80 684V1101M654.09 684V1101M669.38 684V1101M684.67 684V1101M699.96 684V1101M730.54 684V1101M745.83 684V1101M761.12 684V1101M776.41 684V1101M791.70 684V1101M806.99 684V1101M0 1096.23H820M0 1080.94H820M0 1050.36H820M0 1035.07H820M0 1019.78H820M0 1004.49H820M0 989.20H820M0 973.91H820M0 958.62H820M0 943.33H820M0 928.04H820M0 897.46H820M0 882.17H820M0 866.88H820M0 851.59H820M0 836.30H820M0 821.01H820M0 805.72H820M0 790.43H820M0 775.14H820M0 744.56H820M0 729.27H820M0 713.98H820M0 698.69H820M0 683.40H820" stroke="#7d7d7d" stroke-width="1.25" stroke-opacity="0.95"/>
<path d="M103.65 684V1101M256.55 684V1101M409.45 684V1101M562.35 684V1101M715.25 684V1101M0 1065.65H820M0 912.75H820M0 759.85H820" stroke="#202020" stroke-width="1.3"/>
<path d="M-67.0 589.2L733.0 1389.2M-67.0 1389.2L733.0 589.2" stroke="#f0809f" stroke-width="1.2"/>
<path d="M0 989.2H820" stroke="#7ec0fc" stroke-width="1.5"/>
<path d="M333.0 684V1101" stroke="#c9d83a" stroke-width="1.6"/>
<rect x="317.7" y="897.5" width="30.6" height="183.5" rx="1.5" stroke="#ffee10" stroke-width="1.6"/>
<rect x="344.4" y="954.9" width="22.9" height="22.9" fill="#ff0000" fill-opacity="0.5"/>
<polygon points="319.5,989.2 333.0,975.7 346.5,989.2 333.0,1002.7" fill="#fff" fill-opacity="0.3"/>
<line x1="333.0" y1="989.2" x2="333.0" y2="912.9" stroke="#0000ff" stroke-width="1.6"/>
<line x1="333.0" y1="989.2" x2="409.3" y2="989.2" stroke="#00ff00" stroke-width="1.9"/>
<polygon points="326.9,912.9 339.1,912.9 333.0,897.6" fill="#0000ff"/>
<polygon points="326.9,1065.5 339.1,1065.5 333.0,1080.8" fill="#0000ff"/>
<polygon points="409.3,983.1 409.3,995.3 424.6,989.2" fill="#00ff00"/>
<polygon points="256.7,983.1 256.7,995.3 241.4,989.2" fill="#00ff00"/>
<polygon points="327.5,946.7 338.5,946.7 333.0,932.7" fill="#ffee10"/>
<path d="M329.8 985.6h7v2.4h-4.4v2.4h4.4v2.4h-7z" fill="#ff2a2a"/>
</svg>
<div class="abs" style="left:570px;top:5px;width:245px;height:76.500px;background:#1f1f1f"></div>
<div class="abs" style="left:570px;top:5px;width:245px;height:25px;background:#111"></div>
<svg class="abs" style="left:573px;top:12px" width="10" height="10" viewBox="0 0 10 10"><path d="M1.500 3L5 6.500L8.500 3" fill="none" stroke="#ebebeb" stroke-width="1.700"/></svg>
<div class="abs gui" style="left:587px;top:11px;font-weight:bold;font-size:10.6px">Controls</div>
<div class="abs gui" style="left:574px;top:38.8px">PlanePos X cm</div>
<div class="abs" style="left:681px;top:34px;width:81.500px;height:19.500px;background:#424242;border-radius:2px"></div>
<div class="abs" style="left:720.200px;top:34px;width:2px;height:19.500px;background:#2cc9ff"></div>
<div class="abs" style="left:766px;top:34px;width:45.500px;height:19.500px;background:#424242;border-radius:2px"></div>
<div class="abs gui" style="left:769.500px;top:39.200px;color:#2cc9ff">0</div>
<div class="abs gui" style="left:574px;top:62.8px">Helper Visible</div>
<div class="abs" style="left:681px;top:61.200px;width:15px;height:14.800px;background:#424242;border-radius:2px"></div>
</div>
<div id="panel" class="abs"></div>
<div class="abs" style="left:838px;top:16px;width:112px;height:57px;background:#ebebeb;border-radius:8px"></div>
<svg class="abs" style="left:883.700px;top:23.700px" width="21.500" height="21.500" viewBox="0 0 24 24"><path fill="#1a1a1a" d="M12 2.300L3.600 7.100v9.700L12 21.700l8.400-4.900V7.100L12 2.300z"/><path fill="none" stroke="#ebebeb" stroke-width="1.700" d="M12 12.200v9.500M12 12.200L4.300 7.800M12 12.200l7.700-4.400"/><circle cx="12" cy="12.200" r="2.500" fill="#ebebeb"/><circle cx="12" cy="12.200" r="1.100" fill="#1a1a1a"/></svg>
<div class="abs tab" style="left:838px;top:50px;width:112px;color:#1c1c1c">GEOMETRY</div>
<svg class="abs" style="left:1004px;top:24.500px" width="20" height="20" viewBox="0 0 24 24"><path fill="none" stroke="#5c5c5c" stroke-width="1.800" d="M19.300 9.500c.900 1.400 1.300 3 1.200 4.700-.100 1.300-.500 2.500-1.200 3.600H4.700C3.300 15.500 3.100 12.700 4.200 10.300 5.300 7.900 7.500 6.200 10.100 5.700c1.900-.300 3.800 0 5.400.900"/><path fill="#5c5c5c" d="M10.600 15.400c.800.800 2 .800 2.800 0l5.700-8.500-8.500 5.700c-.800.800-.800 2 0 2.800z"/></svg>
<div class="abs tab" style="left:958px;top:50px;width:112px;color:#5c5c5c">SCORING</div>
<svg class="abs" style="left:1123.700px;top:24.500px" width="20" height="20" viewBox="0 0 24 24"><path fill="#5c5c5c" d="M19.140 12.940c.040-.300.060-.610.060-.940 0-.320-.020-.640-.070-.940l2.030-1.580c.180-.140.230-.410.120-.610l-1.920-3.320c-.120-.220-.370-.290-.590-.220l-2.390.960c-.500-.380-1.030-.700-1.620-.940l-.360-2.540c-.040-.240-.240-.410-.480-.410h-3.840c-.240 0-.430.170-.470.410l-.360 2.540c-.590.240-1.130.570-1.620.940l-2.390-.960c-.220-.080-.470 0-.590.220L2.740 8.870c-.120.210-.080.470.120.610l2.030 1.580c-.050.300-.090.630-.090.940s.020.640.070.940l-2.030 1.580c-.180.140-.230.410-.120.610l1.920 3.320c.120.220.370.290.590.220l2.390-.960c.500.380 1.030.700 1.620.940l.360 2.540c.050.240.240.410.480.410h3.840c.240 0 .440-.170.470-.410l.360-2.540c.590-.240 1.130-.560 1.620-.940l2.390.960c.220.080.470 0 .590-.220l1.920-3.320c.120-.220.070-.470-.120-.610l-2.010-1.580zM12 15.600c-1.980 0-3.600-1.620-3.600-3.600s1.620-3.600 3.600-3.600 3.600 1.620 3.600 3.600-1.620 3.600-3.600 3.600z"/></svg>
<div class="abs tab" style="left:1078px;top:50px;width:112px;color:#5c5c5c">SETTINGS</div>
<div class="abs acc" style="top:89px;height:41.5px"></div>
<div class="abs acch" style="top:102.2px">HIERARCHY</div>
<svg class="abs" style="left:1157px;top:104px" width="14" height="12" viewBox="-7 -6 14 12"><path d="M-4.3 -2.2L0 2.2L4.3 -2.2" fill="none" stroke="#555" stroke-width="1.5"/></svg>
<div class="abs acc" style="top:139px;height:130.5px"></div>
<div class="abs acch" style="top:152.45px">DETECTORS</div>
<svg class="abs" style="left:1157px;top:154.25px" width="14" height="12" viewBox="-7 -6 14 12"><path d="M-4.3 2.4L0 -2L4.3 2.4" fill="none" stroke="#555" stroke-width="1.5"/></svg>
<div class="abs div" style="top:182px"></div>
<div class="abs btn" style="left:854px;top:191px;width:102px;height:25.500px;border-radius:6px;box-shadow:0 1px 2px rgba(0,0,0,.3)"></div>
<svg class="abs" style="left:864px;top:197px" width="13" height="13" viewBox="0 0 13 13"><path d="M6.500 1.200v10.600M1.200 6.500h10.600" stroke="#fff" stroke-width="1.600"/></svg>
<div class="abs" style="left:887.500px;top:197.500px;font-size:10.4px;letter-spacing:.18px;color:#fff;line-height:12px;-webkit-text-stroke:.25px #fff">DETECTOR</div>
<div class="abs" style="left:854px;top:225px;width:320px;height:18.500px;background:#d6d6d6"></div>
<div class="abs" style="left:854px;top:225.500px;font-size:12.75px;font-weight:bold;color:#8a68d2;line-height:16px">AlongBeamAxis</div>
<svg class="abs" style="left:1155.500px;top:225.500px" width="17" height="17" viewBox="0 0 24 24"><path fill="#8358d0" d="M12 4.500C7 4.500 2.730 7.610 1 12c1.730 4.390 6 7.500 11 7.500s9.270-3.110 11-7.500c-1.730-4.390-6-7.500-11-7.500zM12 17c-2.760 0-5-2.240-5-5s2.240-5 5-5 5 2.240 5 5-2.240 5-5 5zm0-8c-1.660 0-3 1.340-3 3s1.340 3 3 3 3-1.340 3-3-1.340-3-3-3z"/></svg>
<svg class="abs" style="left:1180px;top:379.500px" width="10" height="10" viewBox="0 0 10 10"><path d="M1 9L9 1M5.500 9L9 5.500" stroke="#666" stroke-width="1"/></svg>
<div class="abs" style="left:838px;top:407.500px;font-size:16px;line-height:18px;color:#222">Details</div>
<div class="abs acc" style="top:437px;height:94px"></div>
<div class="abs acch" style="top:449.95px">INFORMATION</div>
<svg class="abs" style="left:1157px;top:451.75px" width="14" height="12" viewBox="-7 -6 14 12"><path d="M-4.3 2.4L0 -2L4.3 2.4" fill="none" stroke="#555" stroke-width="1.5"/></svg>
<div class="abs div" style="top:479px"></div>
<div class="abs redbox" style="left:904.500px;top:482px;width:246px;height:40.500px"></div>
<div class="abs lab" style="left:825px;top:492.3px;width:130px">Name</div>
<div class="abs inp" style="left:963px;top:488px;width:181px;height:26.5px;line-height:25.5px;padding-left:13.5px;font-size:12.8px;color:#222">AlongBeamAxis</div>
<div class="abs acc" style="top:539px;height:92px"></div>
<div class="abs acch" style="top:551.95px">PLACEMENT</div>
<svg class="abs" style="left:1157px;top:553.75px" width="14" height="12" viewBox="-7 -6 14 12"><path d="M-4.3 2.4L0 -2L4.3 2.4" fill="none" stroke="#555" stroke-width="1.5"/></svg>
<div class="abs div" style="top:581px"></div>
<div class="abs lab" style="left:825px;top:595px;width:130px">Position</div>
<div class="abs inp" style="left:963px;top:590px;width:65px;height:25px;line-height:24px;padding-left:7px;font-size:12px">0 cm</div>
<div class="abs inp" style="left:1036px;top:590px;width:65px;height:25px;line-height:24px;padding-left:7px;font-size:12px">0 cm</div>
<div class="abs inp" style="left:1109px;top:590px;width:65px;height:25px;line-height:24px;padding-left:7px;font-size:12px">0 cm</div>
<div class="abs acc" style="top:639px;height:198.5px"></div>
<div class="abs acch" style="top:652.45px">DIMENSIONS</div>
<svg class="abs" style="left:1157px;top:654.25px" width="14" height="12" viewBox="-7 -6 14 12"><path d="M-4.3 2.4L0 -2L4.3 2.4" fill="none" stroke="#555" stroke-width="1.5"/></svg>
<div class="abs div" style="top:682px"></div>
<div class="abs redbox" style="left:855px;top:686px;width:325px;height:109px"></div>
<div class="abs lab" style="left:825px;top:700px;width:130px">Geometry Type</div>
<div class="abs inp" style="left:963px;top:691px;width:211px;height:33.5px;line-height:32.5px;padding-left:13.5px;font-size:12.5px;color:#222">Cyl</div>
<svg class="abs" style="left:1150px;top:704px" width="10" height="8" viewBox="0 0 10 8"><path d="M1 1.800h8L5 6z" fill="#555"/></svg>
<div class="abs lab" style="left:825px;top:737px;width:130px">Z side (depth)</div>
<div class="abs inp" style="left:963px;top:733px;width:211px;height:23.7px;line-height:22.7px;padding-left:7px;font-size:12px">12 cm</div>
<div class="abs lab" style="left:825px;top:769px;width:130px">Radius</div>
<div class="abs inp" style="left:963px;top:765.5px;width:211px;height:23.7px;line-height:22.7px;padding-left:7px;font-size:12px">1 cm</div>
<div class="abs lab" style="left:825px;top:802px;width:130px">Inner radius</div>
<div class="abs inp" style="left:963px;top:798px;width:211px;height:23.7px;line-height:22.7px;padding-left:7px;font-size:12px">0 cm</div>
<div class="abs acc" style="top:846px;height:140px"></div>
<div class="abs acch" style="top:859.45px">GRID</div>
<svg class="abs" style="left:1157px;top:861.25px" width="14" height="12" viewBox="-7 -6 14 12"><path d="M-4.3 2.4L0 -2L4.3 2.4" fill="none" stroke="#555" stroke-width="1.5"/></svg>
<div class="abs div" style="top:889px"></div>
<div class="abs redbox" style="left:848px;top:893px;width:333px;height:81.500px"></div>
<div class="abs lab" style="left:825px;top:898px;width:130px">number of bins<br>along Z axis</div>
<div class="abs inp" style="left:963px;top:898px;width:211px;height:23.7px;line-height:22.7px;padding-left:7px;font-size:12px">120</div>
<div class="abs lab" style="left:825px;top:938px;width:130px">number of bins<br>along the radius</div>
<div class="abs inp" style="left:963px;top:938.3px;width:211px;height:23.5px;line-height:22.5px;padding-left:7px;font-size:12px">1</div>
<div class="abs acc" style="top:994px;height:85px"></div>
<div class="abs acch" style="top:1007.45px">MATERIAL</div>
<svg class="abs" style="left:1157px;top:1009.25px" width="14" height="12" viewBox="-7 -6 14 12"><path d="M-4.3 2.4L0 -2L4.3 2.4" fill="none" stroke="#555" stroke-width="1.5"/></svg>
<div class="abs div" style="top:1037px"></div>
<div class="abs lab" style="left:825px;top:1045.7px;width:130px">Color</div>
<div class="abs" style="left:964.500px;top:1048.800px;width:28.500px;height:12px;background:#00ffff"></div>
</body></html>
